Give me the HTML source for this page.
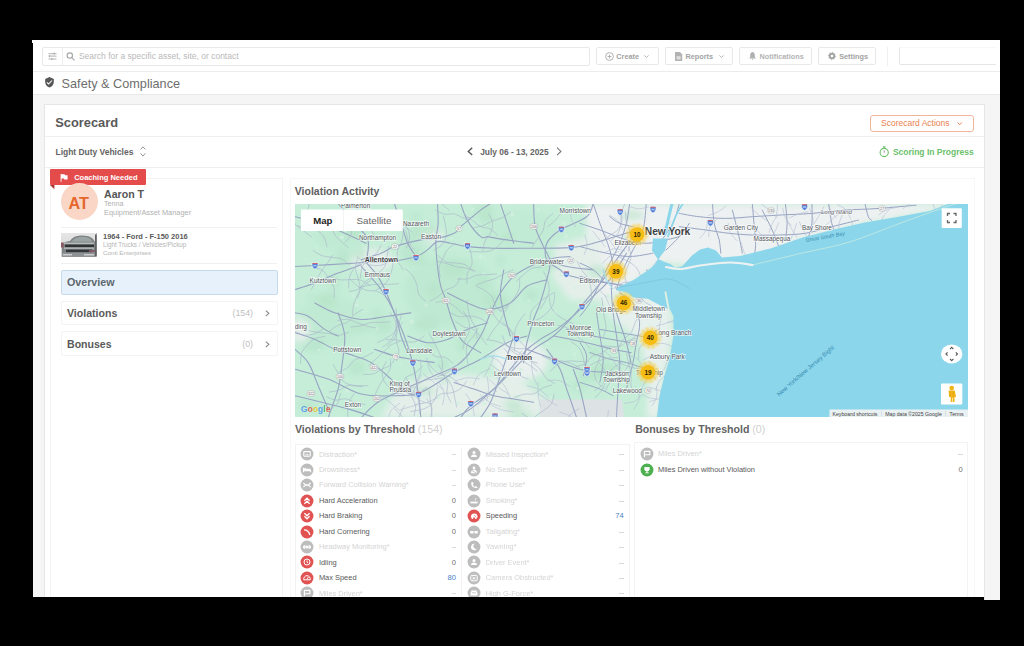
<!DOCTYPE html>
<html><head><meta charset="utf-8"><style>
html,body{margin:0;padding:0;}
body{width:1024px;height:646px;background:#000;position:relative;overflow:hidden;font-family:"Liberation Sans",sans-serif;}
.t{position:absolute;white-space:nowrap;}
.r{position:absolute;}
#wrap{position:absolute;left:0;top:0;width:1024px;height:646px;}
#outer{position:absolute;left:0;top:0;width:1024px;height:646px;filter:blur(0.6px);}
</style></head><body>
<div id="outer"><div id="wrap"><div class="r" style="left:33.00px;top:40.00px;width:967.00px;height:557.00px;background:#fff;"></div>
<div class="r" style="left:32.00px;top:40.00px;width:1.00px;height:3.00px;background:#fff;"></div>
<div class="r" style="left:984.00px;top:590.00px;width:16.00px;height:10.00px;background:#f5f5f5;"></div>
<div class="r" style="left:33.00px;top:94.50px;width:967.00px;height:502.50px;background:#f5f5f5;"></div>
<div class="r" style="left:33.00px;top:71.00px;width:967.00px;height:1.00px;background:#ececec;"></div>
<div class="r" style="left:33.00px;top:93.80px;width:967.00px;height:1.00px;background:#e8e8e8;"></div>
<div class="r" style="left:41.50px;top:46.50px;width:548.50px;height:19.00px;border:1px solid #e8e8e8;border-radius:2px;box-sizing:border-box;"></div>
<div class="r" style="left:62.00px;top:47.00px;width:1.00px;height:18.00px;background:#ececec;"></div>
<div class="t" style="left:78.90px;top:51.55px;font-size:8.5px;line-height:8.5px;color:#b9b9b9;font-weight:400;">Search for a specific asset, site, or contact</div>
<div class="r" style="left:596.30px;top:46.80px;width:63.10px;height:18.40px;border:1px solid #e8e8e8;border-radius:2px;box-sizing:border-box;"></div>
<div class="t" style="left:616.30px;top:52.92px;font-size:7.3px;line-height:7.3px;color:#a2a2a2;font-weight:700;">Create</div>
<div class="r" style="left:664.90px;top:46.80px;width:68.00px;height:18.40px;border:1px solid #e8e8e8;border-radius:2px;box-sizing:border-box;"></div>
<div class="t" style="left:685.50px;top:52.92px;font-size:7.3px;line-height:7.3px;color:#a2a2a2;font-weight:700;">Reports</div>
<div class="r" style="left:739.10px;top:46.80px;width:73.10px;height:18.40px;border:1px solid #e8e8e8;border-radius:2px;box-sizing:border-box;"></div>
<div class="t" style="left:759.60px;top:52.92px;font-size:7.3px;line-height:7.3px;color:#b3b3b3;font-weight:700;">Notifications</div>
<div class="r" style="left:818.40px;top:46.80px;width:57.90px;height:18.40px;border:1px solid #e8e8e8;border-radius:2px;box-sizing:border-box;"></div>
<div class="t" style="left:839.20px;top:52.92px;font-size:7.3px;line-height:7.3px;color:#a2a2a2;font-weight:700;">Settings</div>
<div class="r" style="left:887.00px;top:47.00px;width:1.00px;height:19.00px;background:#f0f0f0;"></div>
<div class="r" style="left:899.00px;top:46.60px;width:97.00px;height:18.90px;border-left:1px solid #e6e6e6;border-bottom:1px solid #e6e6e6;border-top:1px solid #f8f8f8;box-sizing:border-box;border-radius:0 0 0 2px;"></div>
<div class="t" style="left:61.60px;top:77.65px;font-size:12.7px;line-height:12.7px;color:#6e6e6e;font-weight:400;">Safety &amp; Compliance</div>
<div class="r" style="left:44.00px;top:104.00px;width:941.00px;height:496.00px;background:#fff;border:1px solid #e6e6e6;box-sizing:border-box;"></div>
<div class="t" style="left:55.20px;top:117.32px;font-size:12.85px;line-height:12.85px;color:#595959;font-weight:700;">Scorecard</div>
<div class="r" style="left:45.00px;top:136.00px;width:939.00px;height:1.00px;background:#efefef;"></div>
<div class="r" style="left:869.50px;top:115.40px;width:104.80px;height:16.30px;border:1px solid #f2b59a;border-radius:3px;box-sizing:border-box;"></div>
<div class="t" style="left:881.00px;top:119.10px;font-size:8.5px;line-height:8.5px;color:#e9814f;font-weight:400;">Scorecard Actions</div>
<div class="t" style="left:55.50px;top:148.25px;font-size:8.45px;line-height:8.45px;color:#636363;font-weight:700;">Light Duty Vehicles</div>
<div class="t" style="left:480.20px;top:148.29px;font-size:8.4px;line-height:8.4px;color:#636363;font-weight:700;">July 06 - 13, 2025</div>
<div class="t" style="left:892.90px;top:148.20px;font-size:8.5px;line-height:8.5px;color:#6cbf6c;font-weight:700;">Scoring In Progress</div>
<div class="r" style="left:45.00px;top:166.50px;width:939.00px;height:1.00px;background:#efefef;"></div>
<div class="r" style="left:50.00px;top:177.50px;width:233.00px;height:422.50px;border:1px solid #f3f3f3;box-sizing:border-box;"></div>
<div class="r" style="left:290.00px;top:177.50px;width:684.50px;height:422.50px;border:1px solid #f7f7f7;box-sizing:border-box;"></div>
<div class="r" style="left:50.00px;top:169.40px;width:95.50px;height:15.70px;background:#e44c4c;border-radius:1px;"></div>
<div class="t" style="left:74.20px;top:174.05px;font-size:7.5px;line-height:7.5px;color:#fff;font-weight:700;">Coaching Needed</div>
<div class="r" style="left:61.00px;top:183.00px;width:37.00px;height:37.00px;background:#f9d6c6;border-radius:50%;"></div>
<div class="t" style="left:68.60px;top:194.79px;font-size:16.2px;line-height:16.2px;color:#e5672d;font-weight:700;">AT</div>
<div class="t" style="left:104.00px;top:188.53px;font-size:10.6px;line-height:10.6px;color:#555;font-weight:700;">Aaron T</div>
<div class="t" style="left:104.00px;top:201.29px;font-size:7.1px;line-height:7.1px;color:#b0b0b0;font-weight:400;">Tenna</div>
<div class="t" style="left:104.00px;top:208.94px;font-size:7.4px;line-height:7.4px;color:#b0b0b0;font-weight:400;">Equipment/Asset Manager</div>
<div class="r" style="left:61.00px;top:226.50px;width:216.00px;height:1.00px;background:#f0f0f0;"></div>
<div class="r" style="left:61.40px;top:232.90px;width:35.80px;height:23.40px;background:#8a8f94;"></div>
<div class="t" style="left:103.00px;top:232.68px;font-size:7.47px;line-height:7.47px;color:#5a5a5a;font-weight:700;">1964 - Ford - F-150 2016</div>
<div class="t" style="left:103.00px;top:241.67px;font-size:6.3px;line-height:6.3px;color:#b5b5b5;font-weight:400;">Light Trucks / Vehicles/Pickup</div>
<div class="t" style="left:103.00px;top:250.30px;font-size:6.26px;line-height:6.26px;color:#b5b5b5;font-weight:400;">Conti Enterprises</div>
<div class="r" style="left:61.00px;top:263.00px;width:216.00px;height:1.00px;background:#f0f0f0;"></div>
<div class="r" style="left:61.00px;top:269.50px;width:217.00px;height:25.70px;background:#e7f1fb;border:1px solid #c6daeb;border-radius:2px;box-sizing:border-box;"></div>
<div class="t" style="left:67.00px;top:277.24px;font-size:10.7px;line-height:10.7px;color:#5d666e;font-weight:700;">Overview</div>
<div class="r" style="left:61.00px;top:301.00px;width:217.00px;height:24.30px;border:1px solid #f4f4f4;border-radius:2px;box-sizing:border-box;"></div>
<div class="t" style="left:67.00px;top:308.05px;font-size:10.57px;line-height:10.57px;color:#5a5a5a;font-weight:700;">Violations</div>
<div class="t" style="right:771.00px;top:309.05px;font-size:8.8px;line-height:8.8px;color:#c0c0c0;font-weight:400;text-align:right;">(154)</div>
<div class="r" style="left:61.00px;top:330.90px;width:217.00px;height:25.40px;border:1px solid #f4f4f4;border-radius:2px;box-sizing:border-box;"></div>
<div class="t" style="left:67.00px;top:339.05px;font-size:10.57px;line-height:10.57px;color:#5a5a5a;font-weight:700;">Bonuses</div>
<div class="t" style="right:771.00px;top:340.05px;font-size:8.8px;line-height:8.8px;color:#c0c0c0;font-weight:400;text-align:right;">(0)</div>
<div class="t" style="left:294.80px;top:185.51px;font-size:10.5px;line-height:10.5px;color:#606060;font-weight:700;">Violation Activity</div>
<svg width="673" height="213.3" viewBox="295 203.5 673 213.3" style="position:absolute;left:295px;top:203.5px;font-family:'Liberation Sans',sans-serif"><defs><filter id="bl" x="-20%" y="-20%" width="140%" height="140%"><feGaussianBlur stdDeviation="3"/></filter><filter id="bl2"><feGaussianBlur stdDeviation="1.2"/></filter></defs><rect x="295" y="203.5" width="673" height="213.3" fill="#c5edd8"/><g filter="url(#bl)"><ellipse cx="450" cy="290" rx="45" ry="35" fill="#bfe9d2"/><ellipse cx="330" cy="320" rx="30" ry="25" fill="#c0ead3"/><ellipse cx="520" cy="230" rx="40" ry="20" fill="#c2ebd5"/><ellipse cx="560" cy="330" rx="30" ry="15" fill="#c3ecd6"/><ellipse cx="340" cy="235" rx="25" ry="15" fill="#c0ead3"/><polygon points="585,203.5 968,203.5 968,205 930,211 865,223 800,240 760,258 700,266 660,262 640,278 620,292 600,300 592,280 588,250" fill="#edf1f1" /><polygon points="600,300 640,292 672,300 672,340 665,372 660,417 646,417 648,380 640,340 612,318" fill="#e6f0ec" /><polygon points="555,245 600,232 602,300 570,300 552,275" fill="#e4efea" /><ellipse cx="520" cy="360" rx="28" ry="20" fill="#e9f0ee"/><ellipse cx="372" cy="260" rx="22" ry="12" fill="#e3eee9"/><ellipse cx="432" cy="236" rx="12" ry="7" fill="#e3eee9"/><polygon points="380,417 400,385 440,372 480,375 520,380 545,398 540,417" fill="#e4efea" /><ellipse cx="300" cy="330" rx="10" ry="12" fill="#e3eee9"/><ellipse cx="410.1" cy="236.7" rx="10.5" ry="3.4" fill="#b4e3c6" opacity="0.6"/><ellipse cx="482.2" cy="281.8" rx="4.6" ry="6.0" fill="#b4e3c6" opacity="0.6"/><ellipse cx="312.7" cy="296.1" rx="4.7" ry="3.5" fill="#b4e3c6" opacity="0.6"/><ellipse cx="444.3" cy="378.6" rx="5.2" ry="4.3" fill="#b4e3c6" opacity="0.6"/><ellipse cx="513.3" cy="404.0" rx="9.8" ry="5.4" fill="#b4e3c6" opacity="0.6"/><ellipse cx="631.9" cy="214.8" rx="12.6" ry="4.7" fill="#b4e3c6" opacity="0.6"/><ellipse cx="349.0" cy="229.7" rx="7.1" ry="7.9" fill="#b4e3c6" opacity="0.6"/><ellipse cx="361.4" cy="327.1" rx="10.4" ry="5.2" fill="#b4e3c6" opacity="0.6"/><ellipse cx="486.2" cy="218.2" rx="4.6" ry="4.2" fill="#b4e3c6" opacity="0.6"/><ellipse cx="531.3" cy="294.8" rx="7.1" ry="6.5" fill="#b4e3c6" opacity="0.6"/><ellipse cx="454.1" cy="268.0" rx="11.9" ry="7.2" fill="#b4e3c6" opacity="0.6"/><ellipse cx="383.0" cy="325.6" rx="9.3" ry="8.3" fill="#b4e3c6" opacity="0.6"/><ellipse cx="548.0" cy="265.5" rx="13.8" ry="3.7" fill="#b4e3c6" opacity="0.6"/><ellipse cx="442.2" cy="364.0" rx="5.5" ry="5.9" fill="#b4e3c6" opacity="0.6"/><ellipse cx="313.3" cy="345.3" rx="11.6" ry="6.4" fill="#b4e3c6" opacity="0.6"/><ellipse cx="597.7" cy="270.9" rx="11.0" ry="6.6" fill="#b4e3c6" opacity="0.6"/><ellipse cx="497.2" cy="300.8" rx="12.4" ry="8.7" fill="#b4e3c6" opacity="0.6"/><ellipse cx="461.2" cy="344.5" rx="4.6" ry="7.2" fill="#b4e3c6" opacity="0.6"/><ellipse cx="520.0" cy="413.6" rx="12.2" ry="4.7" fill="#b4e3c6" opacity="0.6"/><ellipse cx="431.2" cy="345.4" rx="4.2" ry="5.8" fill="#b4e3c6" opacity="0.6"/><ellipse cx="357.1" cy="229.6" rx="4.6" ry="7.6" fill="#b4e3c6" opacity="0.6"/><ellipse cx="344.0" cy="257.0" rx="7.9" ry="8.2" fill="#b4e3c6" opacity="0.6"/><ellipse cx="327.4" cy="299.3" rx="9.5" ry="8.3" fill="#b4e3c6" opacity="0.6"/><ellipse cx="578.6" cy="386.4" rx="6.8" ry="5.5" fill="#b4e3c6" opacity="0.6"/><ellipse cx="422.0" cy="390.7" rx="13.6" ry="3.9" fill="#b4e3c6" opacity="0.6"/><ellipse cx="359.9" cy="253.7" rx="6.3" ry="5.9" fill="#b4e3c6" opacity="0.6"/><ellipse cx="500.3" cy="260.2" rx="4.0" ry="5.5" fill="#b4e3c6" opacity="0.6"/><ellipse cx="425.5" cy="323.9" rx="13.5" ry="7.1" fill="#b4e3c6" opacity="0.6"/><ellipse cx="475.3" cy="334.7" rx="10.8" ry="3.3" fill="#b4e3c6" opacity="0.6"/><ellipse cx="605.8" cy="368.8" rx="12.7" ry="7.8" fill="#b4e3c6" opacity="0.6"/><ellipse cx="433.4" cy="288.8" rx="5.0" ry="6.8" fill="#b4e3c6" opacity="0.6"/><ellipse cx="321.2" cy="219.1" rx="6.1" ry="4.0" fill="#b4e3c6" opacity="0.6"/><ellipse cx="415.6" cy="216.0" rx="4.0" ry="3.9" fill="#b4e3c6" opacity="0.6"/><ellipse cx="334.5" cy="281.4" rx="4.3" ry="8.2" fill="#b4e3c6" opacity="0.6"/><ellipse cx="508.8" cy="236.2" rx="6.5" ry="5.1" fill="#b4e3c6" opacity="0.6"/><ellipse cx="423.8" cy="230.8" rx="12.5" ry="9.0" fill="#b4e3c6" opacity="0.6"/><ellipse cx="458.4" cy="306.6" rx="4.9" ry="3.6" fill="#b4e3c6" opacity="0.6"/><ellipse cx="416.5" cy="260.6" rx="12.3" ry="4.0" fill="#b4e3c6" opacity="0.6"/><ellipse cx="307.9" cy="404.7" rx="9.3" ry="3.9" fill="#b4e3c6" opacity="0.6"/><ellipse cx="484.7" cy="210.7" rx="9.3" ry="8.9" fill="#b4e3c6" opacity="0.6"/><ellipse cx="593.5" cy="351.2" rx="6.6" ry="5.2" fill="#b4e3c6" opacity="0.6"/><ellipse cx="356.8" cy="367.1" rx="9.3" ry="7.7" fill="#b4e3c6" opacity="0.6"/><ellipse cx="412.1" cy="251.8" rx="12.1" ry="8.9" fill="#b4e3c6" opacity="0.6"/><ellipse cx="589.9" cy="374.3" rx="12.2" ry="7.4" fill="#b4e3c6" opacity="0.6"/><ellipse cx="377.1" cy="313.7" rx="7.6" ry="3.2" fill="#b4e3c6" opacity="0.6"/></g><g fill="#d3f1e1" opacity="0.8"><circle cx="309.2" cy="263.7" r="1.0"/><circle cx="528.5" cy="405.9" r="1.3"/><circle cx="609.2" cy="412.5" r="2.1"/><circle cx="420.3" cy="251.3" r="1.0"/><circle cx="364.9" cy="247.9" r="1.6"/><circle cx="597.1" cy="381.5" r="1.4"/><circle cx="515.5" cy="372.9" r="0.7"/><circle cx="518.0" cy="396.1" r="1.9"/><circle cx="547.5" cy="305.4" r="0.9"/><circle cx="560.4" cy="274.8" r="1.9"/><circle cx="620.6" cy="288.1" r="1.2"/><circle cx="612.4" cy="357.2" r="0.9"/><circle cx="341.9" cy="236.7" r="2.0"/><circle cx="566.1" cy="235.7" r="1.9"/><circle cx="623.5" cy="343.0" r="1.2"/><circle cx="481.1" cy="232.5" r="0.6"/><circle cx="620.4" cy="341.4" r="1.4"/><circle cx="608.1" cy="296.1" r="2.0"/><circle cx="572.6" cy="249.3" r="1.0"/><circle cx="396.7" cy="255.5" r="1.5"/><circle cx="385.6" cy="293.0" r="0.8"/><circle cx="600.3" cy="279.3" r="1.3"/><circle cx="492.5" cy="394.9" r="1.3"/><circle cx="602.8" cy="310.3" r="1.5"/><circle cx="472.8" cy="208.9" r="1.3"/><circle cx="360.4" cy="205.8" r="1.9"/><circle cx="356.9" cy="304.4" r="1.8"/><circle cx="483.6" cy="273.5" r="1.4"/><circle cx="483.3" cy="369.7" r="0.8"/><circle cx="484.9" cy="257.2" r="1.0"/><circle cx="554.8" cy="311.6" r="1.5"/><circle cx="550.8" cy="396.6" r="1.3"/><circle cx="502.1" cy="311.2" r="1.4"/><circle cx="528.6" cy="300.0" r="1.5"/><circle cx="457.8" cy="402.7" r="1.7"/><circle cx="589.3" cy="402.9" r="1.0"/><circle cx="484.6" cy="403.1" r="1.9"/><circle cx="345.3" cy="230.5" r="1.3"/><circle cx="323.9" cy="255.5" r="0.7"/><circle cx="520.9" cy="369.6" r="2.0"/><circle cx="351.0" cy="355.4" r="1.7"/><circle cx="347.2" cy="390.4" r="2.1"/><circle cx="372.5" cy="405.0" r="1.2"/><circle cx="460.8" cy="412.9" r="1.9"/><circle cx="353.3" cy="295.6" r="1.4"/><circle cx="411.9" cy="246.1" r="1.1"/><circle cx="538.3" cy="209.1" r="1.5"/><circle cx="445.4" cy="208.8" r="1.1"/><circle cx="505.9" cy="312.6" r="0.7"/><circle cx="625.1" cy="370.6" r="2.2"/><circle cx="334.6" cy="260.8" r="0.7"/><circle cx="557.1" cy="261.8" r="0.8"/><circle cx="439.3" cy="396.4" r="1.9"/><circle cx="385.3" cy="236.4" r="2.1"/><circle cx="488.3" cy="352.1" r="0.7"/><circle cx="319.0" cy="349.5" r="1.3"/><circle cx="323.9" cy="402.1" r="1.6"/><circle cx="564.5" cy="222.6" r="2.0"/><circle cx="322.0" cy="386.2" r="1.3"/><circle cx="411.9" cy="321.1" r="2.1"/><circle cx="388.4" cy="232.1" r="1.4"/><circle cx="378.7" cy="228.0" r="0.9"/><circle cx="316.6" cy="247.4" r="1.1"/><circle cx="400.7" cy="364.5" r="1.1"/><circle cx="465.0" cy="242.4" r="1.2"/><circle cx="306.0" cy="257.6" r="0.6"/><circle cx="541.9" cy="320.7" r="0.9"/><circle cx="456.7" cy="401.3" r="0.8"/><circle cx="570.2" cy="295.8" r="1.4"/><circle cx="575.4" cy="287.5" r="1.4"/><circle cx="527.0" cy="411.3" r="1.1"/><circle cx="574.7" cy="353.4" r="1.6"/><circle cx="433.6" cy="278.0" r="0.7"/><circle cx="342.8" cy="219.9" r="1.8"/><circle cx="384.3" cy="239.3" r="0.7"/><circle cx="577.6" cy="387.8" r="1.7"/><circle cx="393.0" cy="255.9" r="1.1"/><circle cx="451.6" cy="238.1" r="1.3"/><circle cx="386.9" cy="407.0" r="2.2"/><circle cx="480.5" cy="256.3" r="2.1"/><circle cx="402.2" cy="279.9" r="0.6"/><circle cx="425.9" cy="304.7" r="1.4"/><circle cx="366.3" cy="311.0" r="0.6"/><circle cx="387.2" cy="223.8" r="1.2"/><circle cx="313.8" cy="209.7" r="1.1"/><circle cx="376.8" cy="328.0" r="1.4"/><circle cx="547.7" cy="343.1" r="1.7"/><circle cx="590.1" cy="286.8" r="1.1"/><circle cx="625.0" cy="236.4" r="1.8"/><circle cx="512.3" cy="214.2" r="1.9"/></g><polygon points="540,399 622,399 624,417 540,417" fill="#dde2e5" /><path d="M295.0,266.0 C298.3,265.8 306.6,265.4 314.9,265.0 C323.2,264.5 336.4,263.8 344.7,263.3 C353.0,262.8 356.8,262.4 364.6,262.0 C372.3,261.6 382.5,262.0 391.1,261.0 C399.6,260.0 409.9,258.0 415.9,256.0 C422.0,254.1 424.0,251.9 427.5,249.4 C431.1,246.9 433.6,242.2 437.5,241.1 C441.3,240.0 445.8,241.9 450.7,242.8 C455.7,243.6 460.1,245.2 467.3,246.1 C474.5,246.9 483.9,247.5 493.8,247.7 C503.8,248.0 514.2,247.8 526.9,247.7 C539.6,247.6 559.0,247.9 570.0,247.1 C581.1,246.2 583.1,245.4 593.2,242.8 C603.4,240.1 624.7,233.1 631.0,231.2" fill="none" stroke="#98a4c3" stroke-width="1.1" stroke-linejoin="round" stroke-linecap="round" /><path d="M361.3,259.3 C364.6,258.2 375.6,254.9 381.1,252.7 C386.7,250.5 387.8,248.3 394.4,246.1 C401.0,243.9 413.7,240.8 420.9,239.4 C428.1,238.1 432.0,238.9 437.5,237.8 C443.0,236.7 450.2,234.8 454.1,232.8 C457.9,230.9 456.3,230.1 460.7,226.2 C465.1,222.3 475.6,213.5 480.6,209.6 C485.5,205.8 488.8,204.1 490.5,203.0" fill="none" stroke="#98a4c3" stroke-width="1.1" stroke-linejoin="round" stroke-linecap="round" /><path d="M366.2,262.0 C368.2,264.3 374.5,270.9 377.8,275.9 C381.2,280.9 383.4,285.7 386.1,291.8 C388.9,297.9 391.4,305.0 394.4,312.3 C397.4,319.6 401.3,327.3 404.3,335.5 C407.4,343.8 410.4,353.2 412.6,362.1 C414.8,370.9 416.2,379.4 417.6,388.6 C419.0,397.7 420.4,412.3 420.9,417.1" fill="none" stroke="#98a4c3" stroke-width="1.1" stroke-linejoin="round" stroke-linecap="round" /><path d="M437.5,203.0 C437.6,206.3 438.4,216.5 438.1,222.9 C437.9,229.2 435.9,233.9 435.8,241.1 C435.7,248.3 436.7,258.5 437.5,266.0 C438.3,273.4 439.4,280.3 440.8,285.8 C442.2,291.4 444.1,294.1 445.8,299.1 C447.4,304.1 448.8,310.1 450.7,315.7 C452.7,321.2 455.2,327.8 457.4,332.2 C459.6,336.6 460.1,338.9 464.0,342.2 C467.9,345.5 477.8,350.5 480.6,352.1" fill="none" stroke="#98a4c3" stroke-width="1.1" stroke-linejoin="round" stroke-linecap="round" /><path d="M295.0,289.1 C298.3,288.0 307.7,285.3 314.9,282.5 C322.1,279.8 330.3,275.6 338.1,272.6 C345.8,269.5 357.4,265.7 361.3,264.3" fill="none" stroke="#98a4c3" stroke-width="1.1" stroke-linejoin="round" stroke-linecap="round" /><path d="M295.0,332.2 C298.3,333.3 308.3,336.1 314.9,338.9 C321.5,341.6 328.1,346.0 334.8,348.8 C341.4,351.6 348.6,353.2 354.6,355.4 C360.7,357.6 365.1,358.2 371.2,362.1 C377.3,365.9 386.1,374.2 391.1,378.6 C396.1,383.0 397.2,385.8 401.0,388.6 C404.9,391.3 412.1,394.1 414.3,395.2" fill="none" stroke="#98a4c3" stroke-width="1.1" stroke-linejoin="round" stroke-linecap="round" /><path d="M295.0,368.7 C300.5,370.3 317.1,374.5 328.1,378.6 C339.2,382.8 350.2,390.8 361.3,393.5 C372.3,396.3 384.5,395.5 394.4,395.2 C404.3,394.9 411.0,395.7 420.9,391.9 C430.9,388.0 444.1,377.5 454.1,372.0 C464.0,366.5 471.7,363.7 480.6,358.7 C489.4,353.8 499.3,346.0 507.1,342.2 C514.8,338.3 523.6,336.6 526.9,335.5" fill="none" stroke="#98a4c3" stroke-width="1.1" stroke-linejoin="round" stroke-linecap="round" /><path d="M361.3,417.1 C364.0,414.5 370.7,406.6 377.8,401.8 C385.0,397.1 395.0,393.0 404.3,388.6 C413.7,384.1 424.8,379.7 434.2,375.3 C443.6,370.9 452.9,368.7 460.7,362.1 C468.4,355.4 475.6,343.8 480.6,335.5 C485.5,327.3 487.2,319.5 490.5,312.3 C493.8,305.2 496.6,298.5 500.4,292.5 C504.3,286.4 508.2,280.6 513.7,275.9 C519.2,271.2 526.9,267.3 533.6,264.3 C540.2,261.3 547.4,259.1 553.5,257.7 C559.5,256.3 567.3,256.3 570.0,256.0" fill="none" stroke="#98a4c3" stroke-width="1.1" stroke-linejoin="round" stroke-linecap="round" /><path d="M593.2,203.0 C592.1,205.2 592.1,211.8 586.6,216.2 C581.1,220.7 566.7,225.1 560.1,229.5 C553.5,233.9 549.0,237.8 546.8,242.8 C544.6,247.7 544.6,254.9 546.8,259.3 C549.0,263.7 556.8,266.8 560.1,269.3 C563.4,271.8 562.3,272.6 566.7,274.2 C571.1,275.9 580.0,277.8 586.6,279.2 C593.2,280.6 599.1,281.4 606.5,282.5 C613.9,283.6 626.9,285.3 631.0,285.8" fill="none" stroke="#98a4c3" stroke-width="1.1" stroke-linejoin="round" stroke-linecap="round" /><path d="M533.6,203.0 C533.8,206.9 533.6,219.0 535.2,226.2 C536.9,233.4 541.0,240.3 543.5,246.1 C546.0,251.9 549.6,255.5 550.1,261.0 C550.7,266.5 548.5,272.3 546.8,279.2 C545.2,286.1 542.4,295.8 540.2,302.4 C538.0,309.0 535.8,312.3 533.6,319.0 C531.4,325.6 528.6,335.0 526.9,342.2 C525.3,349.4 524.2,358.7 523.6,362.1" fill="none" stroke="#98a4c3" stroke-width="1.1" stroke-linejoin="round" stroke-linecap="round" /><path d="M631.0,239.4 C628.5,242.8 621.0,252.7 616.4,259.3 C611.8,266.0 608.1,272.6 603.1,279.2 C598.2,285.8 592.1,292.5 586.6,299.1 C581.1,305.7 575.5,312.9 570.0,319.0 C564.5,325.0 559.5,330.6 553.5,335.5 C547.4,340.5 540.2,343.3 533.6,348.8 C526.9,354.3 520.3,362.0 513.7,368.7 C507.1,375.3 501.0,381.9 493.8,388.6 C486.6,395.2 477.2,403.7 470.6,408.4 C464.0,413.2 456.8,415.6 454.1,417.1" fill="none" stroke="#98a4c3" stroke-width="1.1" stroke-linejoin="round" stroke-linecap="round" /><path d="M626.4,252.7 C623.6,257.1 615.3,272.0 609.8,279.2 C604.3,286.4 598.7,290.3 593.2,295.8 C587.7,301.3 582.7,306.8 576.6,312.3 C570.6,317.9 562.8,324.5 556.8,328.9 C550.7,333.3 545.2,335.5 540.2,338.9 C535.2,342.2 529.2,347.1 526.9,348.8" fill="none" stroke="#98a4c3" stroke-width="1.1" stroke-linejoin="round" stroke-linecap="round" /><path d="M526.9,348.8 C531.4,350.4 543.5,355.1 553.5,358.7 C563.4,362.3 573.7,368.1 586.6,370.3 C599.5,372.5 623.6,371.7 631.0,372.0" fill="none" stroke="#98a4c3" stroke-width="1.1" stroke-linejoin="round" stroke-linecap="round" /><path d="M526.9,348.8 C524.2,352.1 515.9,362.0 510.4,368.7 C504.8,375.3 500.4,382.5 493.8,388.6 C487.2,394.6 476.1,400.4 470.6,405.1 C465.1,409.9 462.3,415.1 460.7,417.1" fill="none" stroke="#98a4c3" stroke-width="1.1" stroke-linejoin="round" stroke-linecap="round" /><path d="M553.5,335.5 C559.0,336.6 576.6,340.0 586.6,342.2 C596.5,344.4 605.7,347.1 613.1,348.8 C620.5,350.4 628.0,351.6 631.0,352.1" fill="none" stroke="#98a4c3" stroke-width="1.1" stroke-linejoin="round" stroke-linecap="round" /><path d="M513.7,335.5 C512.6,338.9 509.3,348.8 507.1,355.4 C504.9,362.0 503.2,367.6 500.4,375.3 C497.7,383.0 493.8,394.9 490.5,401.8 C487.2,408.8 482.2,414.5 480.6,417.1" fill="none" stroke="#98a4c3" stroke-width="1.1" stroke-linejoin="round" stroke-linecap="round" /><path d="M503.8,269.3 C503.2,273.1 500.4,285.3 500.4,292.5 C500.4,299.6 502.1,305.2 503.8,312.3 C505.4,319.5 509.3,331.7 510.4,335.5" fill="none" stroke="#98a4c3" stroke-width="1.1" stroke-linejoin="round" stroke-linecap="round" /><path d="M338.1,203.0 C340.8,206.3 349.7,216.8 354.6,222.9 C359.6,229.0 366.0,232.9 367.9,239.4 C369.8,246.0 366.5,258.2 366.2,262.0" fill="none" stroke="#98a4c3" stroke-width="1.1" stroke-linejoin="round" stroke-linecap="round" /><path d="M407.7,335.5 C411.0,336.6 420.9,341.6 427.5,342.2 C434.2,342.7 440.8,341.1 447.4,338.9 C454.0,336.6 460.7,331.7 467.3,328.9 C473.9,326.1 483.9,323.4 487.2,322.3" fill="none" stroke="#98a4c3" stroke-width="1.1" stroke-linejoin="round" stroke-linecap="round" /><path d="M361.3,266.0 C364.6,269.8 375.6,281.4 381.1,289.1 C386.7,296.9 391.1,304.6 394.4,312.3 C397.7,320.1 398.8,328.9 401.0,335.5 C403.2,342.2 406.6,349.3 407.7,352.1" fill="none" stroke="#98a4c3" stroke-width="1.1" stroke-linejoin="round" stroke-linecap="round" /><path d="M338.1,312.3 C339.2,316.2 344.1,326.2 344.7,335.5 C345.3,344.9 342.5,359.8 341.4,368.7 C340.3,377.5 340.3,380.5 338.1,388.6 C335.9,396.6 329.8,412.3 328.1,417.1" fill="none" stroke="#98a4c3" stroke-width="1.1" stroke-linejoin="round" stroke-linecap="round" /><path d="M295.0,348.8 C297.2,351.0 304.4,356.0 308.2,362.1 C312.1,368.1 314.9,377.5 318.2,385.2 C321.5,393.0 326.5,404.6 328.1,408.4" fill="none" stroke="#98a4c3" stroke-width="1.1" stroke-linejoin="round" stroke-linecap="round" /><path d="M374.5,348.8 C377.8,349.9 388.3,353.8 394.4,355.4 C400.5,357.1 404.3,357.6 411.0,358.7 C417.6,359.8 430.3,361.5 434.2,362.1" fill="none" stroke="#98a4c3" stroke-width="1.1" stroke-linejoin="round" stroke-linecap="round" /><path d="M447.4,292.5 C450.7,294.1 460.7,299.6 467.3,302.4 C473.9,305.2 480.0,309.0 487.2,309.0 C494.4,309.0 503.7,306.3 510.4,302.4 C517.0,298.5 520.9,289.7 526.9,285.8 C533.0,282.0 543.5,280.3 546.8,279.2" fill="none" stroke="#98a4c3" stroke-width="1.1" stroke-linejoin="round" stroke-linecap="round" /><path d="M566.7,328.9 C571.1,330.0 582.5,333.3 593.2,335.5 C603.9,337.8 624.7,341.1 631.0,342.2" fill="none" stroke="#98a4c3" stroke-width="1.1" stroke-linejoin="round" stroke-linecap="round" /><path d="M546.8,259.3 C550.1,260.4 559.0,264.3 566.7,266.0 C574.4,267.6 588.8,268.7 593.2,269.3" fill="none" stroke="#98a4c3" stroke-width="1.1" stroke-linejoin="round" stroke-linecap="round" /><path d="M487.2,236.1 C490.5,236.7 499.3,238.3 507.1,239.4 C514.8,240.6 529.2,242.2 533.6,242.8" fill="none" stroke="#98a4c3" stroke-width="1.1" stroke-linejoin="round" stroke-linecap="round" /><path d="M295.0,216.2 C299.4,217.4 313.2,220.1 321.5,222.9 C329.8,225.6 337.2,229.5 344.7,232.8 C352.2,236.1 362.6,241.1 366.2,242.8" fill="none" stroke="#98a4c3" stroke-width="1.1" stroke-linejoin="round" stroke-linecap="round" /><path d="M394.4,203.0 C395.5,206.3 398.8,216.3 401.0,222.9 C403.2,229.5 405.2,237.2 407.7,242.8 C410.1,248.3 414.6,253.8 415.9,256.0" fill="none" stroke="#98a4c3" stroke-width="1.1" stroke-linejoin="round" stroke-linecap="round" /><path d="M314.9,302.4 C318.2,304.1 327.0,309.6 334.8,312.3 C342.5,315.1 352.4,318.4 361.3,319.0 C370.1,319.5 379.5,316.8 387.8,315.7 C396.1,314.6 407.1,312.9 411.0,312.3" fill="none" stroke="#98a4c3" stroke-width="1.1" stroke-linejoin="round" stroke-linecap="round" /><path d="M454.1,381.9 C457.4,383.0 467.3,386.3 473.9,388.6 C480.6,390.8 487.2,393.5 493.8,395.2 C500.4,396.8 507.1,397.4 513.7,398.5 C520.3,399.6 530.3,401.3 533.6,401.8" fill="none" stroke="#98a4c3" stroke-width="1.1" stroke-linejoin="round" stroke-linecap="round" /><path d="M295.0,395.2 C299.4,396.3 312.7,399.6 321.5,401.8 C330.3,404.0 339.2,405.9 348.0,408.4 C356.9,411.0 370.1,415.6 374.5,417.1" fill="none" stroke="#98a4c3" stroke-width="1.1" stroke-linejoin="round" stroke-linecap="round" /><path d="M573.3,368.7 C574.4,372.0 577.8,380.5 580.0,388.6 C582.2,396.6 585.5,412.3 586.6,417.1" fill="none" stroke="#98a4c3" stroke-width="1.1" stroke-linejoin="round" stroke-linecap="round" /><path d="M546.8,348.8 C549.0,352.1 556.8,362.0 560.1,368.7 C563.4,375.3 563.9,380.5 566.7,388.6 C569.5,396.6 575.0,412.3 576.6,417.1" fill="none" stroke="#98a4c3" stroke-width="1.1" stroke-linejoin="round" stroke-linecap="round" /><path d="M613.1,302.4 C614.2,305.7 617.5,315.7 619.7,322.3 C621.9,328.9 624.5,335.5 626.4,342.2 C628.2,348.8 630.2,358.7 631.0,362.1" fill="none" stroke="#98a4c3" stroke-width="1.1" stroke-linejoin="round" stroke-linecap="round" /><path d="M460.7,203.0 C461.8,205.8 464.0,214.0 467.3,219.6 C470.6,225.1 477.2,233.4 480.6,236.1 C483.9,238.9 486.1,236.1 487.2,236.1" fill="none" stroke="#98a4c3" stroke-width="1.1" stroke-linejoin="round" stroke-linecap="round" /><path d="M500.4,203.0 C501.5,206.3 504.9,216.3 507.1,222.9 C509.3,229.5 512.6,239.4 513.7,242.8" fill="none" stroke="#98a4c3" stroke-width="1.1" stroke-linejoin="round" stroke-linecap="round" /><path d="M295.0,312.3 C297.2,312.9 303.3,312.9 308.2,315.7 C313.2,318.4 319.9,325.6 324.8,328.9 C329.8,332.2 335.9,334.4 338.1,335.5" fill="none" stroke="#98a4c3" stroke-width="1.1" stroke-linejoin="round" stroke-linecap="round" /><path d="M580.0,222.9 C583.3,224.0 592.1,226.7 599.9,229.5 C607.6,232.3 618.7,237.2 626.4,239.4 C634.1,241.7 639.6,242.8 646.3,242.8 C652.9,242.8 660.6,240.6 666.1,239.4 C671.7,238.3 677.2,236.7 679.4,236.1" fill="none" stroke="#98a4c3" stroke-width="1.0" stroke-linejoin="round" stroke-linecap="round" /><path d="M580.0,246.1 C584.4,247.2 598.2,251.0 606.5,252.7 C614.8,254.4 622.0,256.0 629.7,256.0 C637.4,256.0 649.0,253.3 652.9,252.7" fill="none" stroke="#98a4c3" stroke-width="1.0" stroke-linejoin="round" stroke-linecap="round" /><path d="M593.2,203.0 C594.4,206.3 597.1,215.1 599.9,222.9 C602.6,230.6 607.6,241.7 609.8,249.4 C612.0,257.1 612.9,262.6 613.1,269.3 C613.4,275.9 611.5,282.0 611.5,289.1 C611.5,296.3 612.3,304.6 613.1,312.3 C614.0,320.1 615.3,327.3 616.5,335.5 C617.6,343.8 619.5,353.2 619.8,362.1 C620.0,370.9 618.7,379.4 618.1,388.6 C617.5,397.7 616.7,412.3 616.5,417.1" fill="none" stroke="#98a4c3" stroke-width="1.0" stroke-linejoin="round" stroke-linecap="round" /><path d="M629.7,203.0 C629.1,206.3 628.0,216.3 626.4,222.9 C624.7,229.5 622.5,236.1 619.8,242.8 C617.0,249.4 613.1,256.0 609.8,262.6 C606.5,269.3 603.2,275.9 599.9,282.5 C596.6,289.1 593.3,296.9 589.9,302.4 C586.6,307.9 581.7,313.5 580.0,315.7" fill="none" stroke="#98a4c3" stroke-width="1.0" stroke-linejoin="round" stroke-linecap="round" /><path d="M646.3,203.0 C645.7,207.4 645.2,221.8 643.0,229.5 C640.8,237.2 636.3,242.8 633.0,249.4 C629.7,256.0 625.8,262.6 623.1,269.3 C620.3,275.9 617.6,285.8 616.5,289.1" fill="none" stroke="#98a4c3" stroke-width="1.0" stroke-linejoin="round" stroke-linecap="round" /><path d="M580.0,275.9 C582.2,276.5 588.3,278.1 593.2,279.2 C598.2,280.3 603.7,281.4 609.8,282.5 C615.9,283.6 622.5,285.3 629.7,285.8 C636.9,286.4 649.0,285.8 652.9,285.8" fill="none" stroke="#98a4c3" stroke-width="1.0" stroke-linejoin="round" stroke-linecap="round" /><path d="M679.4,212.9 C682.7,213.5 691.5,215.4 699.3,216.2 C707.0,217.1 717.0,217.9 725.8,217.9 C734.6,217.9 743.5,216.8 752.3,216.2 C761.1,215.7 768.9,215.2 778.8,214.6 C788.8,214.0 800.9,213.8 811.9,212.9 C823.0,212.1 834.0,210.5 845.1,209.6 C856.1,208.8 866.4,208.8 878.2,208.0 C890.0,207.1 909.7,205.2 916.0,204.7" fill="none" stroke="#98a4c3" stroke-width="1.0" stroke-linejoin="round" stroke-linecap="round" /><path d="M679.4,226.2 C683.8,226.7 697.6,228.4 705.9,229.5 C714.2,230.6 721.4,232.0 729.1,232.8 C736.8,233.6 744.0,234.2 752.3,234.5 C760.6,234.8 770.0,234.8 778.8,234.5 C787.6,234.2 796.5,234.2 805.3,232.8 C814.1,231.4 823.0,228.4 831.8,226.2 C840.7,224.0 853.9,220.7 858.3,219.6" fill="none" stroke="#98a4c3" stroke-width="1.0" stroke-linejoin="round" stroke-linecap="round" /><path d="M712.5,203.0 C712.8,206.3 713.1,216.8 714.2,222.9 C715.3,229.0 718.1,234.5 719.2,239.4 C720.3,244.4 720.5,250.5 720.8,252.7" fill="none" stroke="#98a4c3" stroke-width="1.0" stroke-linejoin="round" stroke-linecap="round" /><path d="M752.3,203.0 C752.6,206.3 753.4,216.3 754.0,222.9 C754.5,229.5 755.6,236.7 755.6,242.8 C755.6,248.8 754.2,256.6 754.0,259.3" fill="none" stroke="#98a4c3" stroke-width="1.0" stroke-linejoin="round" stroke-linecap="round" /><path d="M785.4,203.0 C785.7,206.3 787.1,216.8 787.1,222.9 C787.1,229.0 785.7,236.7 785.4,239.4" fill="none" stroke="#98a4c3" stroke-width="1.0" stroke-linejoin="round" stroke-linecap="round" /><path d="M811.9,203.0 C811.9,206.3 812.5,217.4 811.9,222.9 C811.4,228.4 809.2,233.9 808.6,236.1" fill="none" stroke="#98a4c3" stroke-width="1.0" stroke-linejoin="round" stroke-linecap="round" /><path d="M732.4,209.6 C733.5,214.0 737.4,229.0 739.0,236.1 C740.7,243.3 741.8,249.9 742.4,252.7" fill="none" stroke="#98a4c3" stroke-width="1.0" stroke-linejoin="round" stroke-linecap="round" /><path d="M762.2,209.6 C763.9,212.9 769.4,223.4 772.2,229.5 C774.9,235.6 777.7,243.3 778.8,246.1" fill="none" stroke="#98a4c3" stroke-width="1.0" stroke-linejoin="round" stroke-linecap="round" /><path d="M828.5,203.0 C829.1,206.3 830.7,217.9 831.8,222.9 C832.9,227.8 834.6,231.2 835.1,232.8" fill="none" stroke="#98a4c3" stroke-width="1.0" stroke-linejoin="round" stroke-linecap="round" /><path d="M865.0,203.0 C865.5,205.2 867.2,213.5 868.3,216.2 C869.4,219.0 871.0,219.0 871.6,219.6" fill="none" stroke="#98a4c3" stroke-width="1.0" stroke-linejoin="round" stroke-linecap="round" /><path d="M619.8,292.5 C622.0,294.1 629.7,297.4 633.0,302.4 C636.3,307.4 639.1,315.7 639.6,322.3 C640.2,328.9 637.4,335.5 636.3,342.2 C635.2,348.8 634.7,354.3 633.0,362.1 C631.4,369.8 627.5,384.1 626.4,388.6" fill="none" stroke="#98a4c3" stroke-width="1.0" stroke-linejoin="round" stroke-linecap="round" /><path d="M599.9,328.9 C603.2,329.5 613.1,331.1 619.8,332.2 C626.4,333.3 633.6,334.4 639.6,335.5 C645.7,336.6 653.4,338.3 656.2,338.9" fill="none" stroke="#98a4c3" stroke-width="1.0" stroke-linejoin="round" stroke-linecap="round" /><path d="M589.9,352.1 C593.3,353.2 603.7,357.1 609.8,358.7 C615.9,360.4 620.3,360.4 626.4,362.1 C632.5,363.7 643.0,367.6 646.3,368.7" fill="none" stroke="#98a4c3" stroke-width="1.0" stroke-linejoin="round" stroke-linecap="round" /><path d="M580.0,381.9 C583.3,383.0 594.4,386.3 599.9,388.6 C605.4,390.8 610.9,394.1 613.1,395.2" fill="none" stroke="#98a4c3" stroke-width="1.0" stroke-linejoin="round" stroke-linecap="round" /><path d="M596.6,312.3 C597.1,316.2 598.8,327.8 599.9,335.5 C601.0,343.3 603.2,351.0 603.2,358.7 C603.2,366.5 600.4,378.1 599.9,381.9" fill="none" stroke="#98a4c3" stroke-width="1.0" stroke-linejoin="round" stroke-linecap="round" /><path d="M679.4,203.0 C678.3,206.3 676.1,216.3 672.8,222.9 C669.5,229.5 661.7,239.4 659.5,242.8" fill="none" stroke="#98a4c3" stroke-width="1.0" stroke-linejoin="round" stroke-linecap="round" /><path d="M689.3,222.9 C687.7,225.1 683.3,231.7 679.4,236.1 C675.5,240.5 668.4,247.2 666.1,249.4" fill="none" stroke="#98a4c3" stroke-width="1.0" stroke-linejoin="round" stroke-linecap="round" /><path d="M580.0,262.6 C582.2,263.7 589.4,266.5 593.2,269.3 C597.1,272.0 601.5,277.6 603.2,279.2" fill="none" stroke="#98a4c3" stroke-width="1.0" stroke-linejoin="round" stroke-linecap="round" /><path d="M646.3,269.3 C647.9,270.9 654.0,273.7 656.2,279.2 C658.4,284.7 659.0,298.5 659.5,302.4" fill="none" stroke="#98a4c3" stroke-width="1.0" stroke-linejoin="round" stroke-linecap="round" /><path d="M580.0,342.2 C581.1,344.4 586.1,349.9 586.6,355.4 C587.2,360.9 583.9,372.0 583.3,375.3" fill="none" stroke="#98a4c3" stroke-width="1.0" stroke-linejoin="round" stroke-linecap="round" /><path d="M609.8,216.2 C611.5,217.4 615.9,221.2 619.8,222.9 C623.6,224.5 630.8,225.6 633.0,226.2" fill="none" stroke="#98a4c3" stroke-width="1.0" stroke-linejoin="round" stroke-linecap="round" /><path d="M603.3,336.7 C603.7,335.1 605.8,330.4 606.0,327.1 C606.2,323.8 604.9,320.5 604.4,317.2 C603.9,313.9 603.5,310.6 603.1,307.3 C602.7,304.0 602.0,299.0 601.8,297.4" fill="none" stroke="#a7b4ca" stroke-width="0.6" stroke-linejoin="round" stroke-linecap="round" /><path d="M583.9,374.0 C584.8,372.6 587.0,367.8 589.4,365.6 C591.8,363.4 595.1,362.0 598.1,360.7 C601.1,359.4 604.4,358.3 607.6,357.7 C610.9,357.1 615.9,357.2 617.6,357.1" fill="none" stroke="#a7b4ca" stroke-width="0.6" stroke-linejoin="round" stroke-linecap="round" /><path d="M378.2,211.5 C379.5,212.6 383.1,216.3 386.0,217.7 C388.9,219.1 392.8,218.4 395.8,219.7 C398.8,221.0 401.4,223.3 404.1,225.3 C406.8,227.3 410.6,230.5 411.9,231.5" fill="none" stroke="#a7b4ca" stroke-width="0.6" stroke-linejoin="round" stroke-linecap="round" /><path d="M513.4,336.5 C512.7,335.0 511.3,329.8 509.1,327.5 C506.9,325.2 503.0,324.6 500.5,322.5 C498.0,320.4 495.8,317.5 494.1,314.7 C492.4,311.9 490.9,307.0 490.3,305.5" fill="none" stroke="#a7b4ca" stroke-width="0.6" stroke-linejoin="round" stroke-linecap="round" /><path d="M471.0,317.4 C469.5,316.6 464.8,314.7 462.1,312.8 C459.4,310.9 457.6,307.8 454.9,305.9 C452.2,304.0 449.1,302.1 446.0,301.4 C442.9,300.7 437.7,301.7 436.0,301.8" fill="none" stroke="#a7b4ca" stroke-width="0.6" stroke-linejoin="round" stroke-linecap="round" /><path d="M390.3,358.2 C390.3,359.8 391.1,365.1 390.2,368.2 C389.3,371.3 386.6,373.7 384.8,376.5 C383.0,379.3 381.0,382.1 379.4,385.0 C377.8,387.9 375.9,392.6 375.2,394.1" fill="none" stroke="#a7b4ca" stroke-width="0.6" stroke-linejoin="round" stroke-linecap="round" /><path d="M462.9,348.6 C463.3,347.0 464.2,342.0 465.3,338.9 C466.4,335.8 468.9,332.9 469.4,329.7 C469.9,326.5 469.5,322.9 468.5,319.8 C467.5,316.7 464.4,312.6 463.6,311.1" fill="none" stroke="#a7b4ca" stroke-width="0.6" stroke-linejoin="round" stroke-linecap="round" /><path d="M386.3,361.1 C385.6,362.6 382.6,367.0 382.2,370.2 C381.8,373.4 382.5,377.2 383.8,380.1 C385.1,383.0 387.8,385.6 390.2,387.8 C392.6,390.0 397.0,392.6 398.4,393.5" fill="none" stroke="#a7b4ca" stroke-width="0.6" stroke-linejoin="round" stroke-linecap="round" /><path d="M528.5,350.4 C527.4,349.1 524.1,345.3 521.9,342.8 C519.7,340.3 517.7,337.7 515.5,335.2 C513.3,332.7 511.0,330.2 508.7,327.8 C506.4,325.4 502.9,321.9 501.7,320.7" fill="none" stroke="#a7b4ca" stroke-width="0.6" stroke-linejoin="round" stroke-linecap="round" /><path d="M340.3,392.7 C339.9,394.3 339.4,399.5 337.8,402.3 C336.2,405.1 332.2,406.7 330.7,409.5 C329.2,412.3 329.4,416.0 328.8,419.3 C328.2,422.6 327.6,427.6 327.3,429.2" fill="none" stroke="#a7b4ca" stroke-width="0.6" stroke-linejoin="round" stroke-linecap="round" /><path d="M578.8,408.3 C577.4,409.2 572.9,411.6 570.5,413.9 C568.1,416.2 567.1,420.0 564.6,422.0 C562.1,424.0 558.1,424.2 555.4,426.0 C552.7,427.8 549.4,431.7 548.2,432.8" fill="none" stroke="#a7b4ca" stroke-width="0.6" stroke-linejoin="round" stroke-linecap="round" /><path d="M497.7,234.8 C496.4,233.7 492.9,229.9 490.0,228.4 C487.1,226.9 483.2,227.3 480.3,225.9 C477.4,224.5 475.0,221.9 472.3,219.9 C469.6,217.9 465.6,214.9 464.3,213.9" fill="none" stroke="#a7b4ca" stroke-width="0.6" stroke-linejoin="round" stroke-linecap="round" /><path d="M601.5,352.7 C600.9,354.3 599.2,359.0 598.0,362.1 C596.8,365.2 594.8,368.3 594.6,371.5 C594.4,374.7 595.3,378.4 596.9,381.2 C598.5,383.9 603.0,386.9 604.2,388.0" fill="none" stroke="#a7b4ca" stroke-width="0.6" stroke-linejoin="round" stroke-linecap="round" /><path d="M467.2,299.7 C467.3,301.3 467.5,306.3 468.2,309.6 C468.9,312.9 469.8,316.1 471.1,319.2 C472.4,322.2 475.0,324.8 476.0,327.9 C477.0,331.0 476.8,336.1 477.0,337.8" fill="none" stroke="#a7b4ca" stroke-width="0.6" stroke-linejoin="round" stroke-linecap="round" /><path d="M300.6,362.7 C300.8,361.0 300.5,355.7 301.6,352.7 C302.7,349.7 305.1,346.9 307.4,344.5 C309.6,342.1 312.2,339.5 315.1,338.1 C318.0,336.7 323.2,336.3 324.8,335.9" fill="none" stroke="#a7b4ca" stroke-width="0.6" stroke-linejoin="round" stroke-linecap="round" /><path d="M398.5,283.2 C396.9,283.3 391.9,283.8 388.6,283.9 C385.3,284.0 381.9,283.4 378.6,283.6 C375.3,283.8 372.0,284.3 368.7,284.9 C365.4,285.5 360.5,286.7 358.9,287.1" fill="none" stroke="#a7b4ca" stroke-width="0.6" stroke-linejoin="round" stroke-linecap="round" /><path d="M393.6,215.1 C394.4,216.6 396.6,221.2 398.6,223.8 C400.6,226.4 404.1,228.0 405.7,230.8 C407.3,233.6 407.0,237.5 408.3,240.5 C409.6,243.5 412.8,247.5 413.7,248.9" fill="none" stroke="#a7b4ca" stroke-width="0.6" stroke-linejoin="round" stroke-linecap="round" /><path d="M390.3,312.3 C391.2,313.7 394.6,317.8 395.4,320.9 C396.2,324.0 396.0,327.8 395.2,330.9 C394.4,334.0 392.6,337.2 390.6,339.8 C388.6,342.4 384.4,345.3 383.1,346.4" fill="none" stroke="#a7b4ca" stroke-width="0.6" stroke-linejoin="round" stroke-linecap="round" /><path d="M514.5,396.8 C516.1,396.3 520.8,394.3 524.0,393.7 C527.2,393.1 531.0,394.2 534.0,393.2 C537.0,392.2 539.3,389.1 542.3,387.7 C545.3,386.3 550.2,385.1 551.8,384.6" fill="none" stroke="#a7b4ca" stroke-width="0.6" stroke-linejoin="round" stroke-linecap="round" /><path d="M453.3,363.1 C452.0,362.1 448.3,358.2 445.3,357.0 C442.3,355.8 438.4,357.0 435.4,355.9 C432.4,354.8 430.3,351.4 427.3,350.1 C424.3,348.8 419.0,348.6 417.4,348.3" fill="none" stroke="#a7b4ca" stroke-width="0.6" stroke-linejoin="round" stroke-linecap="round" /><path d="M460.5,277.2 C459.6,278.6 457.5,283.4 455.0,285.5 C452.5,287.6 448.6,287.8 445.8,289.5 C443.0,291.2 440.9,294.0 438.2,295.9 C435.5,297.8 430.9,300.1 429.5,300.9" fill="none" stroke="#a7b4ca" stroke-width="0.6" stroke-linejoin="round" stroke-linecap="round" /><path d="M402.3,322.0 C401.5,323.5 398.4,327.7 397.4,330.8 C396.4,333.9 396.1,337.4 396.4,340.7 C396.6,344.0 398.9,347.2 398.9,350.4 C398.9,353.6 396.9,358.5 396.5,360.1" fill="none" stroke="#a7b4ca" stroke-width="0.6" stroke-linejoin="round" stroke-linecap="round" /><path d="M469.0,251.2 C470.7,251.2 475.7,251.4 479.0,251.3 C482.3,251.2 485.9,251.6 489.0,250.7 C492.1,249.8 495.2,248.1 497.8,246.1 C500.4,244.1 503.3,239.8 504.4,238.5" fill="none" stroke="#a7b4ca" stroke-width="0.6" stroke-linejoin="round" stroke-linecap="round" /><path d="M330.8,276.8 C332.5,277.2 337.2,279.0 340.5,279.4 C343.8,279.8 347.2,279.1 350.5,279.1 C353.8,279.1 357.4,278.7 360.5,279.6 C363.6,280.5 367.8,283.7 369.2,284.5" fill="none" stroke="#a7b4ca" stroke-width="0.6" stroke-linejoin="round" stroke-linecap="round" /><path d="M554.9,291.7 C553.4,292.5 549.0,294.8 546.2,296.6 C543.4,298.4 540.7,300.4 538.3,302.7 C535.9,305.0 533.1,307.4 531.7,310.3 C530.3,313.2 530.1,318.5 529.8,320.1" fill="none" stroke="#a7b4ca" stroke-width="0.6" stroke-linejoin="round" stroke-linecap="round" /><path d="M394.4,408.2 C395.5,409.4 399.3,412.9 401.4,415.4 C403.5,417.9 405.9,420.5 407.2,423.5 C408.5,426.5 407.9,430.2 409.0,433.3 C410.1,436.4 413.2,440.6 414.0,442.0" fill="none" stroke="#a7b4ca" stroke-width="0.6" stroke-linejoin="round" stroke-linecap="round" /><path d="M392.1,257.2 C390.9,258.2 387.4,262.3 384.5,263.6 C381.6,264.9 377.9,265.3 374.6,265.1 C371.3,264.9 367.8,263.9 364.9,262.4 C362.0,260.9 358.6,257.0 357.4,255.9" fill="none" stroke="#a7b4ca" stroke-width="0.6" stroke-linejoin="round" stroke-linecap="round" /><path d="M307.4,211.8 C307.8,210.1 308.9,205.3 309.6,202.0 C310.3,198.7 310.7,195.4 311.5,192.2 C312.3,189.0 314.4,185.8 314.4,182.6 C314.4,179.4 311.8,174.7 311.3,173.1" fill="none" stroke="#a7b4ca" stroke-width="0.6" stroke-linejoin="round" stroke-linecap="round" /><path d="M433.1,399.6 C434.4,398.6 438.0,394.6 441.0,393.4 C444.0,392.2 447.7,393.2 450.9,392.4 C454.1,391.6 457.5,390.4 460.1,388.5 C462.7,386.6 465.4,382.1 466.5,380.8" fill="none" stroke="#a7b4ca" stroke-width="0.6" stroke-linejoin="round" stroke-linecap="round" /><path d="M352.5,314.7 C352.7,313.0 352.7,307.9 353.5,304.7 C354.3,301.5 355.6,298.4 357.1,295.4 C358.6,292.4 360.2,289.4 362.3,286.9 C364.4,284.4 368.6,281.5 369.9,280.4" fill="none" stroke="#a7b4ca" stroke-width="0.6" stroke-linejoin="round" stroke-linecap="round" /><path d="M455.5,320.8 C456.9,321.7 460.8,325.0 463.8,326.4 C466.8,327.8 470.7,327.4 473.5,329.0 C476.3,330.6 478.4,333.5 480.6,336.0 C482.8,338.5 485.5,342.8 486.5,344.1" fill="none" stroke="#a7b4ca" stroke-width="0.6" stroke-linejoin="round" stroke-linecap="round" /><path d="M403.3,231.9 C403.0,233.5 402.5,238.5 401.5,241.7 C400.5,244.9 398.1,247.7 397.5,250.9 C396.9,254.1 397.1,257.8 398.1,260.9 C399.1,264.0 402.5,267.9 403.4,269.3" fill="none" stroke="#a7b4ca" stroke-width="0.6" stroke-linejoin="round" stroke-linecap="round" /><path d="M478.3,327.4 C477.5,328.8 475.1,333.3 473.2,336.0 C471.3,338.7 468.2,340.9 467.1,343.9 C466.0,346.9 466.2,350.6 466.4,353.9 C466.6,357.2 467.8,362.1 468.1,363.8" fill="none" stroke="#a7b4ca" stroke-width="0.6" stroke-linejoin="round" stroke-linecap="round" /><path d="M456.6,406.4 C456.3,404.7 455.3,399.9 454.6,396.6 C453.9,393.3 453.6,389.9 452.3,386.8 C451.1,383.8 449.2,380.8 447.1,378.3 C445.0,375.8 440.9,372.8 439.6,371.7" fill="none" stroke="#a7b4ca" stroke-width="0.6" stroke-linejoin="round" stroke-linecap="round" /><path d="M626.6,353.0 C627.0,354.6 628.0,359.5 628.7,362.8 C629.4,366.1 630.5,369.2 630.9,372.5 C631.3,375.8 630.7,379.2 630.9,382.5 C631.1,385.8 631.7,390.8 631.9,392.5" fill="none" stroke="#a7b4ca" stroke-width="0.6" stroke-linejoin="round" stroke-linecap="round" /><path d="M387.5,345.1 C388.6,344.0 392.9,340.8 394.4,338.0 C395.9,335.2 396.2,331.5 396.6,328.2 C397.0,324.9 396.9,321.5 396.8,318.2 C396.7,314.9 396.1,309.9 396.0,308.2" fill="none" stroke="#a7b4ca" stroke-width="0.6" stroke-linejoin="round" stroke-linecap="round" /><path d="M532.1,246.6 C533.0,245.2 535.8,241.0 537.6,238.2 C539.4,235.4 541.8,232.9 543.1,229.9 C544.4,226.9 543.9,223.0 545.5,220.2 C547.1,217.4 551.4,214.4 552.6,213.2" fill="none" stroke="#a7b4ca" stroke-width="0.6" stroke-linejoin="round" stroke-linecap="round" /><path d="M406.0,377.2 C406.7,378.7 409.4,383.1 410.4,386.2 C411.4,389.3 410.9,392.9 411.8,396.1 C412.7,399.3 415.2,402.1 415.6,405.3 C416.0,408.5 414.3,413.6 414.0,415.2" fill="none" stroke="#a7b4ca" stroke-width="0.6" stroke-linejoin="round" stroke-linecap="round" /><path d="M468.6,244.3 C469.0,245.9 470.6,250.7 471.2,254.0 C471.8,257.3 472.5,260.9 471.9,264.0 C471.3,267.1 468.2,269.8 467.4,272.9 C466.6,276.0 467.0,281.2 466.9,282.9" fill="none" stroke="#a7b4ca" stroke-width="0.6" stroke-linejoin="round" stroke-linecap="round" /><path d="M433.8,249.7 C435.2,248.8 440.0,246.5 442.1,244.1 C444.2,241.7 445.7,238.3 446.3,235.1 C446.9,231.9 446.0,228.4 445.5,225.1 C445.0,221.8 443.7,217.0 443.3,215.4" fill="none" stroke="#a7b4ca" stroke-width="0.6" stroke-linejoin="round" stroke-linecap="round" /><path d="M605.4,390.6 C606.2,389.1 607.9,384.1 610.1,381.7 C612.3,379.3 615.9,378.4 618.5,376.4 C621.1,374.3 623.8,372.1 625.7,369.4 C627.6,366.7 629.1,361.8 629.8,360.3" fill="none" stroke="#a7b4ca" stroke-width="0.6" stroke-linejoin="round" stroke-linecap="round" /><path d="M618.2,361.7 C619.7,362.4 624.2,364.5 627.4,365.6 C630.6,366.7 633.8,367.5 637.1,368.1 C640.4,368.7 643.8,369.1 647.1,369.1 C650.4,369.1 655.4,368.3 657.0,368.1" fill="none" stroke="#a7b4ca" stroke-width="0.6" stroke-linejoin="round" stroke-linecap="round" /><path d="M357.5,205.6 C357.5,207.3 358.4,212.5 357.5,215.6 C356.6,218.7 353.3,221.0 352.2,224.1 C351.1,227.2 352.3,231.0 351.1,234.0 C349.9,237.0 346.0,240.6 345.0,241.9" fill="none" stroke="#a7b4ca" stroke-width="0.6" stroke-linejoin="round" stroke-linecap="round" /><path d="M370.5,279.9 C371.7,278.8 375.5,275.5 377.9,273.2 C380.3,270.9 383.3,268.8 384.8,265.9 C386.3,263.0 386.2,259.4 386.9,256.1 C387.5,252.8 388.4,247.9 388.7,246.3" fill="none" stroke="#a7b4ca" stroke-width="0.6" stroke-linejoin="round" stroke-linecap="round" /><path d="M426.7,398.1 C427.6,399.5 430.8,403.7 431.7,406.8 C432.6,409.9 431.1,413.8 432.1,416.8 C433.1,419.8 435.8,422.4 437.9,425.0 C439.9,427.6 443.3,431.2 444.4,432.5" fill="none" stroke="#a7b4ca" stroke-width="0.6" stroke-linejoin="round" stroke-linecap="round" /><path d="M576.0,366.0 C577.6,365.5 582.9,364.7 585.6,363.0 C588.3,361.3 589.6,357.4 592.3,355.7 C595.0,353.9 598.8,354.0 601.8,352.5 C604.8,351.0 608.6,347.7 610.0,346.7" fill="none" stroke="#a7b4ca" stroke-width="0.6" stroke-linejoin="round" stroke-linecap="round" /><path d="M554.1,393.7 C553.6,395.3 553.0,400.6 551.3,403.3 C549.6,406.0 546.4,407.9 543.8,410.0 C541.2,412.1 538.0,413.4 535.6,415.6 C533.2,417.8 530.3,422.0 529.2,423.3" fill="none" stroke="#a7b4ca" stroke-width="0.6" stroke-linejoin="round" stroke-linecap="round" /><path d="M543.7,271.5 C544.4,273.0 547.0,277.3 547.9,280.5 C548.8,283.7 549.5,287.3 549.1,290.5 C548.7,293.7 547.0,296.8 545.5,299.8 C544.0,302.8 541.2,307.0 540.4,308.4" fill="none" stroke="#a7b4ca" stroke-width="0.6" stroke-linejoin="round" stroke-linecap="round" /><path d="M620.7,210.1 C620.9,211.7 622.5,216.8 622.0,220.0 C621.5,223.2 620.0,226.7 618.0,229.2 C616.0,231.7 612.4,232.8 609.8,234.9 C607.2,237.0 603.6,240.6 602.4,241.7" fill="none" stroke="#a7b4ca" stroke-width="0.6" stroke-linejoin="round" stroke-linecap="round" /><path d="M385.4,295.3 C383.9,294.5 379.6,291.6 376.5,290.7 C373.4,289.8 369.7,290.7 366.5,289.8 C363.3,288.9 360.2,287.2 357.5,285.4 C354.8,283.5 351.3,279.8 350.1,278.7" fill="none" stroke="#a7b4ca" stroke-width="0.6" stroke-linejoin="round" stroke-linecap="round" /><path d="M579.7,367.3 C578.2,366.5 573.9,364.0 570.8,362.8 C567.7,361.6 564.4,360.9 561.1,360.3 C557.8,359.8 554.4,360.3 551.2,359.5 C548.0,358.7 543.5,356.0 542.0,355.3" fill="none" stroke="#a7b4ca" stroke-width="0.6" stroke-linejoin="round" stroke-linecap="round" /><path d="M326.9,246.4 C326.4,244.8 325.8,239.6 324.1,236.8 C322.4,234.0 319.7,231.4 316.8,229.9 C313.9,228.4 310.2,228.7 307.0,227.9 C303.8,227.1 299.0,225.7 297.4,225.3" fill="none" stroke="#a7b4ca" stroke-width="0.6" stroke-linejoin="round" stroke-linecap="round" /><path d="M410.8,410.9 C412.4,410.6 417.5,410.3 420.7,409.4 C423.9,408.5 427.2,407.2 429.7,405.2 C432.2,403.2 434.4,400.2 435.7,397.2 C437.0,394.2 437.0,389.0 437.3,387.4" fill="none" stroke="#a7b4ca" stroke-width="0.6" stroke-linejoin="round" stroke-linecap="round" /><path d="M469.5,354.1 C468.2,355.1 464.0,357.9 461.5,360.1 C459.0,362.3 456.8,364.9 454.2,367.0 C451.6,369.1 448.9,371.1 446.0,372.7 C443.1,374.3 438.3,375.9 436.8,376.5" fill="none" stroke="#a7b4ca" stroke-width="0.6" stroke-linejoin="round" stroke-linecap="round" /><path d="M554.3,382.9 C552.9,382.0 548.2,379.7 545.9,377.4 C543.6,375.1 542.5,371.6 540.4,369.1 C538.2,366.6 535.4,364.7 533.0,362.3 C530.6,359.9 527.3,356.2 526.2,355.0" fill="none" stroke="#a7b4ca" stroke-width="0.6" stroke-linejoin="round" stroke-linecap="round" /><path d="M426.8,360.0 C427.8,361.3 430.3,365.7 432.6,368.1 C434.9,370.5 437.6,372.7 440.6,374.1 C443.6,375.5 447.5,375.0 450.4,376.4 C453.3,377.8 456.8,381.6 458.1,382.7" fill="none" stroke="#a7b4ca" stroke-width="0.6" stroke-linejoin="round" stroke-linecap="round" /><path d="M496.6,273.5 C494.9,273.6 489.9,274.0 486.6,274.2 C483.3,274.4 479.8,274.0 476.6,274.7 C473.4,275.4 470.5,277.8 467.3,278.4 C464.1,279.0 459.0,278.4 457.3,278.4" fill="none" stroke="#a7b4ca" stroke-width="0.6" stroke-linejoin="round" stroke-linecap="round" /><path d="M522.1,413.1 C523.5,414.1 528.0,416.6 530.3,418.9 C532.6,421.2 534.6,424.2 535.8,427.2 C537.0,430.2 537.7,433.9 537.4,437.1 C537.1,440.3 534.7,445.0 534.2,446.6" fill="none" stroke="#a7b4ca" stroke-width="0.6" stroke-linejoin="round" stroke-linecap="round" /><path d="M313.7,266.7 C315.3,267.3 320.5,268.3 323.0,270.3 C325.5,272.3 327.1,275.6 328.9,278.4 C330.7,281.2 333.0,284.0 333.9,287.1 C334.8,290.2 334.0,295.4 334.0,297.1" fill="none" stroke="#a7b4ca" stroke-width="0.6" stroke-linejoin="round" stroke-linecap="round" /><path d="M426.6,386.9 C425.2,387.8 421.4,391.2 418.4,392.6 C415.4,394.0 411.9,395.3 408.7,395.3 C405.5,395.3 402.3,392.8 399.1,392.7 C395.9,392.6 390.9,394.4 389.3,394.8" fill="none" stroke="#a7b4ca" stroke-width="0.6" stroke-linejoin="round" stroke-linecap="round" /><path d="M502.7,335.2 C503.3,336.7 504.4,341.8 506.2,344.5 C508.0,347.2 510.6,349.7 513.3,351.6 C516.0,353.5 519.2,354.8 522.4,355.7 C525.6,356.6 530.7,356.8 532.4,357.0" fill="none" stroke="#a7b4ca" stroke-width="0.6" stroke-linejoin="round" stroke-linecap="round" /><path d="M503.8,341.8 C505.1,342.9 508.7,346.4 511.5,348.2 C514.3,350.0 517.6,351.0 520.4,352.9 C523.1,354.8 525.1,357.7 528.0,359.3 C530.9,360.9 535.9,362.0 537.5,362.5" fill="none" stroke="#a7b4ca" stroke-width="0.6" stroke-linejoin="round" stroke-linecap="round" /><path d="M406.1,247.7 C406.7,246.1 409.2,241.5 409.5,238.3 C409.8,235.1 409.0,231.4 407.7,228.5 C406.4,225.6 403.8,223.1 401.6,220.6 C399.4,218.1 395.7,214.7 394.5,213.5" fill="none" stroke="#a7b4ca" stroke-width="0.6" stroke-linejoin="round" stroke-linecap="round" /><path d="M487.0,339.2 C488.7,339.5 493.7,340.0 496.9,340.9 C500.1,341.8 503.0,343.6 506.1,344.8 C509.2,346.0 512.4,347.2 515.7,347.8 C519.0,348.4 524.0,348.1 525.7,348.1" fill="none" stroke="#a7b4ca" stroke-width="0.6" stroke-linejoin="round" stroke-linecap="round" /><path d="M404.6,405.2 C403.8,406.7 401.2,411.0 400.0,414.1 C398.8,417.2 397.9,420.4 397.1,423.6 C396.3,426.8 396.4,430.4 395.1,433.4 C393.8,436.4 390.1,440.1 389.1,441.5" fill="none" stroke="#a7b4ca" stroke-width="0.6" stroke-linejoin="round" stroke-linecap="round" /><path d="M638.9,281.4 C638.9,283.1 638.6,288.2 639.4,291.4 C640.2,294.6 641.4,298.1 643.5,300.5 C645.6,302.9 649.7,303.6 651.9,305.9 C654.1,308.2 656.1,313.1 656.9,314.5" fill="none" stroke="#a7b4ca" stroke-width="0.6" stroke-linejoin="round" stroke-linecap="round" /><path d="M444.1,377.3 C442.4,377.5 437.5,378.1 434.2,378.6 C430.9,379.1 427.3,379.1 424.3,380.3 C421.3,381.5 418.1,383.4 416.0,385.8 C413.9,388.2 412.7,393.5 412.0,395.0" fill="none" stroke="#a7b4ca" stroke-width="0.6" stroke-linejoin="round" stroke-linecap="round" /><path d="M487.5,339.5 C488.3,338.1 490.6,333.6 492.4,330.8 C494.2,328.0 496.7,325.7 498.5,322.9 C500.3,320.1 501.7,317.0 503.3,314.1 C504.9,311.2 507.4,306.8 508.2,305.4" fill="none" stroke="#a7b4ca" stroke-width="0.6" stroke-linejoin="round" stroke-linecap="round" /><path d="M349.6,264.5 C348.3,263.5 344.6,259.8 341.6,258.5 C338.6,257.2 335.1,257.4 331.8,256.8 C328.5,256.2 325.0,256.2 321.9,255.1 C318.8,254.0 314.6,250.9 313.2,250.1" fill="none" stroke="#a7b4ca" stroke-width="0.6" stroke-linejoin="round" stroke-linecap="round" /><path d="M628.7,246.4 C629.1,248.1 631.2,252.9 631.1,256.1 C631.0,259.3 628.9,262.4 627.9,265.6 C626.9,268.8 625.0,271.9 624.9,275.1 C624.8,278.3 626.8,283.3 627.2,284.9" fill="none" stroke="#a7b4ca" stroke-width="0.6" stroke-linejoin="round" stroke-linecap="round" /><path d="M614.9,286.5 C616.4,285.7 620.7,282.8 623.9,282.0 C627.1,281.2 630.7,282.3 633.8,281.4 C636.9,280.5 639.6,277.8 642.7,276.8 C645.8,275.8 651.0,275.7 652.6,275.5" fill="none" stroke="#a7b4ca" stroke-width="0.6" stroke-linejoin="round" stroke-linecap="round" /><path d="M375.5,289.9 C376.9,289.0 381.5,286.8 383.9,284.5 C386.3,282.2 388.3,279.3 389.7,276.4 C391.1,273.4 391.8,270.1 392.5,266.8 C393.2,263.6 393.8,258.5 394.1,256.9" fill="none" stroke="#a7b4ca" stroke-width="0.6" stroke-linejoin="round" stroke-linecap="round" /><path d="M476.1,285.6 C477.6,286.3 482.3,288.2 485.0,290.1 C487.7,292.0 490.6,294.1 492.4,296.8 C494.2,299.5 494.0,303.6 495.9,306.2 C497.8,308.8 502.4,311.4 503.7,312.4" fill="none" stroke="#a7b4ca" stroke-width="0.6" stroke-linejoin="round" stroke-linecap="round" /><path d="M491.2,364.1 C492.5,365.1 496.2,368.8 499.2,370.1 C502.2,371.4 505.8,371.1 509.0,371.9 C512.2,372.7 515.4,373.9 518.5,375.0 C521.6,376.1 526.3,377.9 527.9,378.5" fill="none" stroke="#a7b4ca" stroke-width="0.6" stroke-linejoin="round" stroke-linecap="round" /><path d="M513.2,269.3 C511.7,270.0 507.0,271.8 504.0,273.2 C501.0,274.6 498.3,276.7 495.2,278.0 C492.1,279.3 488.8,279.8 485.6,280.9 C482.5,282.0 477.9,283.9 476.3,284.5" fill="none" stroke="#a7b4ca" stroke-width="0.6" stroke-linejoin="round" stroke-linecap="round" /><path d="M449.0,209.9 C447.8,208.8 444.4,205.0 441.6,203.2 C438.8,201.4 435.3,201.0 432.5,199.2 C429.7,197.4 427.1,195.1 425.0,192.5 C422.9,189.9 421.0,185.2 420.2,183.7" fill="none" stroke="#a7b4ca" stroke-width="0.6" stroke-linejoin="round" stroke-linecap="round" /><path d="M455.8,242.7 C454.5,243.7 449.9,246.2 447.8,248.7 C445.7,251.2 444.5,254.5 443.1,257.5 C441.7,260.5 439.7,263.5 439.2,266.7 C438.7,269.9 440.0,275.0 440.1,276.7" fill="none" stroke="#a7b4ca" stroke-width="0.6" stroke-linejoin="round" stroke-linecap="round" /><path d="M450.3,312.1 C451.8,312.8 456.2,315.7 459.4,316.2 C462.6,316.7 466.1,315.2 469.4,315.4 C472.7,315.6 476.1,316.2 479.2,317.4 C482.3,318.6 486.4,321.6 487.8,322.4" fill="none" stroke="#a7b4ca" stroke-width="0.6" stroke-linejoin="round" stroke-linecap="round" /><path d="M473.9,216.4 C472.3,216.6 467.2,218.1 464.0,217.6 C460.8,217.1 458.0,214.2 454.8,213.5 C451.6,212.8 448.0,214.3 444.8,213.7 C441.6,213.1 437.2,210.4 435.7,209.7" fill="none" stroke="#a7b4ca" stroke-width="0.6" stroke-linejoin="round" stroke-linecap="round" /><path d="M638.7,358.7 C638.8,357.1 638.1,351.7 639.1,348.7 C640.1,345.7 643.0,343.3 644.9,340.6 C646.8,337.9 648.1,334.4 650.6,332.4 C653.1,330.4 658.3,329.1 659.8,328.4" fill="none" stroke="#a7b4ca" stroke-width="0.6" stroke-linejoin="round" stroke-linecap="round" /><path d="M611.5,239.7 C612.6,238.5 616.8,235.2 618.3,232.4 C619.8,229.6 620.2,226.0 620.7,222.7 C621.2,219.4 620.5,215.9 621.2,212.7 C621.9,209.5 624.2,204.9 624.8,203.4" fill="none" stroke="#a7b4ca" stroke-width="0.6" stroke-linejoin="round" stroke-linecap="round" /><path d="M354.0,393.3 C353.1,394.7 349.9,398.8 348.9,401.9 C347.9,405.0 348.2,408.5 347.8,411.8 C347.4,415.1 347.9,418.8 346.7,421.8 C345.5,424.8 341.9,428.5 340.9,429.9" fill="none" stroke="#a7b4ca" stroke-width="0.6" stroke-linejoin="round" stroke-linecap="round" /><path d="M370.8,260.2 C369.2,260.5 363.9,260.6 361.0,262.0 C358.1,263.4 355.6,266.1 353.6,268.7 C351.6,271.3 350.0,274.5 349.2,277.7 C348.4,280.9 348.8,286.0 348.7,287.7" fill="none" stroke="#a7b4ca" stroke-width="0.6" stroke-linejoin="round" stroke-linecap="round" /><path d="M618.4,347.7 C619.2,346.3 621.2,341.5 623.3,339.0 C625.4,336.5 629.0,335.1 630.9,332.5 C632.8,329.9 633.4,326.4 634.7,323.3 C636.0,320.2 638.2,315.7 638.9,314.2" fill="none" stroke="#a7b4ca" stroke-width="0.6" stroke-linejoin="round" stroke-linecap="round" /><path d="M516.3,280.6 C517.6,279.4 521.2,276.0 523.8,273.9 C526.4,271.8 528.8,269.2 531.8,267.9 C534.8,266.6 538.7,267.5 541.7,266.2 C544.7,264.9 548.3,261.1 549.6,260.1" fill="none" stroke="#a7b4ca" stroke-width="0.6" stroke-linejoin="round" stroke-linecap="round" /><path d="M637.6,337.3 C636.0,337.8 631.1,338.9 628.1,340.3 C625.1,341.7 622.8,344.9 619.8,345.8 C616.8,346.7 613.1,346.0 609.8,345.8 C606.5,345.6 601.5,345.0 599.8,344.9" fill="none" stroke="#a7b4ca" stroke-width="0.6" stroke-linejoin="round" stroke-linecap="round" /><path d="M422.5,365.6 C421.3,366.7 417.9,370.5 415.2,372.4 C412.5,374.3 408.6,374.7 406.2,376.8 C403.8,378.9 403.1,382.8 400.8,385.2 C398.5,387.6 394.0,390.0 392.6,391.0" fill="none" stroke="#a7b4ca" stroke-width="0.6" stroke-linejoin="round" stroke-linecap="round" /><path d="M386.2,339.2 C387.9,339.2 392.9,339.0 396.2,339.3 C399.5,339.6 402.7,340.9 406.0,341.2 C409.3,341.5 413.0,342.0 416.0,341.0 C419.0,340.0 422.8,336.2 424.2,335.2" fill="none" stroke="#a7b4ca" stroke-width="0.6" stroke-linejoin="round" stroke-linecap="round" /><path d="M311.5,236.4 C310.2,235.4 306.1,232.3 303.5,230.3 C300.9,228.3 297.6,226.7 295.6,224.2 C293.6,221.7 293.4,217.7 291.4,215.1 C289.4,212.5 285.1,209.8 283.8,208.7" fill="none" stroke="#a7b4ca" stroke-width="0.6" stroke-linejoin="round" stroke-linecap="round" /><path d="M377.3,342.2 C378.8,341.4 383.4,339.4 386.2,337.7 C389.0,336.0 392.2,334.3 394.3,331.8 C396.4,329.3 397.6,326.0 398.8,322.9 C400.0,319.8 401.2,315.0 401.7,313.4" fill="none" stroke="#a7b4ca" stroke-width="0.6" stroke-linejoin="round" stroke-linecap="round" /><path d="M376.2,327.6 C374.6,327.2 369.7,326.4 366.5,325.5 C363.3,324.6 360.2,323.2 357.1,322.1 C354.0,321.0 350.8,319.2 347.6,318.9 C344.4,318.5 339.4,319.8 337.7,320.0" fill="none" stroke="#a7b4ca" stroke-width="0.6" stroke-linejoin="round" stroke-linecap="round" /><path d="M618.4,256.2 C619.9,256.9 624.5,258.8 627.4,260.5 C630.3,262.2 633.4,263.9 635.6,266.3 C637.8,268.7 639.3,272.0 640.4,275.1 C641.5,278.2 641.8,283.3 642.1,284.9" fill="none" stroke="#a7b4ca" stroke-width="0.6" stroke-linejoin="round" stroke-linecap="round" /><path d="M436.7,260.5 C438.3,260.9 443.2,262.0 446.4,262.9 C449.6,263.8 452.7,265.3 455.9,266.1 C459.1,266.9 462.6,266.8 465.8,267.5 C469.0,268.2 473.7,270.1 475.3,270.6" fill="none" stroke="#a7b4ca" stroke-width="0.6" stroke-linejoin="round" stroke-linecap="round" /><path d="M450.9,401.8 C450.2,400.3 447.4,395.8 446.9,392.6 C446.4,389.4 448.3,385.8 447.7,382.6 C447.1,379.5 444.6,376.7 443.2,373.7 C441.8,370.7 439.7,366.1 439.0,364.6" fill="none" stroke="#a7b4ca" stroke-width="0.6" stroke-linejoin="round" stroke-linecap="round" /><path d="M438.0,254.9 C439.3,256.0 442.8,260.1 445.7,261.4 C448.6,262.7 452.3,262.0 455.6,262.5 C458.9,263.0 462.6,262.9 465.5,264.3 C468.4,265.7 471.8,269.7 473.1,270.8" fill="none" stroke="#a7b4ca" stroke-width="0.6" stroke-linejoin="round" stroke-linecap="round" /><path d="M348.4,246.9 C347.1,245.8 343.0,242.9 340.6,240.6 C338.2,238.3 335.7,235.8 334.1,233.0 C332.5,230.2 332.5,226.4 330.8,223.6 C329.1,220.8 325.2,217.3 324.1,216.1" fill="none" stroke="#a7b4ca" stroke-width="0.6" stroke-linejoin="round" stroke-linecap="round" /><path d="M405.2,268.1 C406.4,269.2 410.5,272.3 412.4,275.0 C414.3,277.7 415.7,280.9 416.8,284.0 C417.9,287.1 417.3,291.0 418.8,293.8 C420.3,296.6 424.7,299.6 425.9,300.8" fill="none" stroke="#a7b4ca" stroke-width="0.6" stroke-linejoin="round" stroke-linecap="round" /><path d="M587.1,361.5 C585.4,361.4 580.4,360.9 577.1,360.8 C573.8,360.7 570.4,360.1 567.1,360.6 C563.9,361.1 560.4,362.0 557.6,363.7 C554.9,365.4 551.8,369.6 550.6,370.8" fill="none" stroke="#a7b4ca" stroke-width="0.6" stroke-linejoin="round" stroke-linecap="round" /><path d="M379.0,213.2 C377.8,214.3 374.3,217.9 371.6,219.8 C368.9,221.7 365.9,223.7 362.8,224.6 C359.7,225.5 356.1,225.6 352.8,225.5 C349.5,225.4 344.6,224.1 343.0,223.8" fill="none" stroke="#a7b4ca" stroke-width="0.6" stroke-linejoin="round" stroke-linecap="round" /><path d="M390.4,321.3 C388.8,321.4 383.8,321.8 380.5,321.9 C377.2,322.0 373.8,321.6 370.5,322.1 C367.2,322.7 364.1,324.4 360.9,325.2 C357.6,325.9 352.6,326.4 351.0,326.6" fill="none" stroke="#a7b4ca" stroke-width="0.6" stroke-linejoin="round" stroke-linecap="round" /><path d="M628.1,250.6 C628.5,248.9 630.2,244.1 630.5,240.8 C630.8,237.5 630.7,234.1 630.0,230.9 C629.3,227.7 627.1,224.7 626.4,221.5 C625.7,218.3 625.7,213.2 625.6,211.6" fill="none" stroke="#a7b4ca" stroke-width="0.6" stroke-linejoin="round" stroke-linecap="round" /><path d="M621.2,361.7 C619.8,362.7 615.6,365.4 613.1,367.6 C610.6,369.8 608.2,372.2 606.4,375.0 C604.6,377.8 604.4,381.6 602.4,384.2 C600.4,386.8 595.8,389.3 594.5,390.3" fill="none" stroke="#a7b4ca" stroke-width="0.6" stroke-linejoin="round" stroke-linecap="round" /><path d="M514.4,350.5 C514.5,348.8 514.8,343.8 514.9,340.5 C515.0,337.2 514.2,333.7 514.9,330.5 C515.6,327.3 517.2,324.2 518.9,321.3 C520.6,318.4 524.0,314.7 525.0,313.4" fill="none" stroke="#a7b4ca" stroke-width="0.6" stroke-linejoin="round" stroke-linecap="round" /><path d="M591.6,296.8 C591.4,295.1 591.4,290.1 590.8,286.8 C590.2,283.5 589.3,280.2 587.8,277.3 C586.3,274.4 583.5,272.2 581.7,269.4 C579.9,266.6 577.7,262.1 576.9,260.6" fill="none" stroke="#a7b4ca" stroke-width="0.6" stroke-linejoin="round" stroke-linecap="round" /><path d="M326.5,396.3 C328.0,396.8 332.7,399.3 335.9,399.6 C339.1,399.9 342.6,397.9 345.8,398.3 C349.0,398.7 351.9,401.1 355.1,402.0 C358.3,402.9 363.3,403.7 364.9,404.0" fill="none" stroke="#a7b4ca" stroke-width="0.6" stroke-linejoin="round" stroke-linecap="round" /><path d="M348.2,211.0 C349.7,211.8 354.2,214.0 357.0,215.8 C359.8,217.6 362.6,219.5 365.0,221.8 C367.4,224.1 369.6,226.8 371.3,229.6 C373.0,232.4 374.5,237.3 375.1,238.8" fill="none" stroke="#a7b4ca" stroke-width="0.6" stroke-linejoin="round" stroke-linecap="round" /><path d="M322.4,329.0 C320.9,329.8 316.6,332.7 313.5,333.6 C310.4,334.5 306.7,334.9 303.5,334.5 C300.3,334.1 297.4,331.3 294.2,330.9 C291.0,330.5 285.9,332.1 284.3,332.3" fill="none" stroke="#a7b4ca" stroke-width="0.6" stroke-linejoin="round" stroke-linecap="round" /><path d="M595.0,397.0 C596.2,395.8 600.1,392.5 601.9,389.7 C603.7,386.9 605.2,383.7 605.7,380.5 C606.2,377.3 606.1,373.5 605.0,370.5 C603.9,367.5 600.2,363.8 599.2,362.4" fill="none" stroke="#a7b4ca" stroke-width="0.6" stroke-linejoin="round" stroke-linecap="round" /><path d="M588.2,375.5 C587.7,374.0 585.8,369.3 584.9,366.1 C584.0,362.9 584.1,359.5 583.1,356.3 C582.1,353.1 580.9,349.7 578.9,347.2 C576.9,344.7 572.3,342.1 571.0,341.1" fill="none" stroke="#a7b4ca" stroke-width="0.6" stroke-linejoin="round" stroke-linecap="round" /><path d="M333.3,364.0 C334.1,365.5 336.4,370.0 338.1,372.8 C339.8,375.6 341.2,379.1 343.6,381.1 C346.1,383.2 349.6,384.2 352.8,385.1 C356.0,386.0 361.1,386.0 362.8,386.2" fill="none" stroke="#a7b4ca" stroke-width="0.6" stroke-linejoin="round" stroke-linecap="round" /><path d="M396.1,355.3 C395.3,356.8 393.4,361.8 391.1,364.0 C388.8,366.2 385.1,367.1 382.2,368.6 C379.2,370.2 376.5,372.4 373.4,373.3 C370.3,374.2 365.1,373.8 363.4,373.9" fill="none" stroke="#a7b4ca" stroke-width="0.6" stroke-linejoin="round" stroke-linecap="round" /><path d="M510.2,211.5 C508.9,212.5 505.1,215.8 502.1,217.3 C499.1,218.8 495.6,219.0 492.5,220.3 C489.4,221.6 486.8,223.8 483.7,224.9 C480.6,226.1 475.5,226.8 473.9,227.2" fill="none" stroke="#a7b4ca" stroke-width="0.6" stroke-linejoin="round" stroke-linecap="round" /><path d="M482.9,250.5 C483.2,248.9 483.7,243.7 485.0,240.7 C486.3,237.7 489.3,235.4 490.6,232.4 C491.9,229.4 492.9,225.8 492.6,222.6 C492.3,219.4 489.4,214.9 488.8,213.4" fill="none" stroke="#a7b4ca" stroke-width="0.6" stroke-linejoin="round" stroke-linecap="round" /><path d="M368.7,365.1 C369.9,363.9 373.6,360.6 376.1,358.4 C378.6,356.2 381.1,353.9 383.5,351.6 C385.9,349.3 388.1,346.5 390.8,344.7 C393.6,342.9 398.5,341.4 400.0,340.8" fill="none" stroke="#a7b4ca" stroke-width="0.6" stroke-linejoin="round" stroke-linecap="round" /><path d="M362.7,308.9 C361.3,309.8 356.8,312.1 354.3,314.2 C351.8,316.3 350.4,319.9 347.7,321.7 C345.0,323.5 341.2,323.4 338.2,324.8 C335.2,326.2 331.2,329.4 329.8,330.3" fill="none" stroke="#a7b4ca" stroke-width="0.6" stroke-linejoin="round" stroke-linecap="round" /><path d="M373.0,351.9 C371.5,352.7 367.2,355.2 364.1,356.5 C361.0,357.8 357.3,357.9 354.6,359.6 C351.9,361.3 350.4,364.9 347.8,366.9 C345.2,368.9 340.4,370.6 338.9,371.4" fill="none" stroke="#a7b4ca" stroke-width="0.6" stroke-linejoin="round" stroke-linecap="round" /><path d="M537.0,370.3 C535.7,369.3 531.8,366.2 529.0,364.4 C526.2,362.6 523.2,360.9 520.2,359.5 C517.2,358.1 513.6,357.6 511.0,355.7 C508.4,353.8 505.5,349.4 504.4,348.2" fill="none" stroke="#a7b4ca" stroke-width="0.6" stroke-linejoin="round" stroke-linecap="round" /><path d="M329.3,391.6 C330.9,391.2 336.0,390.7 339.1,389.6 C342.2,388.5 344.9,385.8 348.0,385.0 C351.1,384.2 354.7,385.1 358.0,385.1 C361.3,385.1 366.3,385.1 368.0,385.1" fill="none" stroke="#a7b4ca" stroke-width="0.6" stroke-linejoin="round" stroke-linecap="round" /><path d="M429.0,390.6 C429.2,392.3 430.1,397.2 430.5,400.5 C430.9,403.8 431.7,407.2 431.6,410.5 C431.5,413.8 430.8,417.2 429.7,420.3 C428.6,423.4 425.7,427.6 424.9,429.1" fill="none" stroke="#a7b4ca" stroke-width="0.6" stroke-linejoin="round" stroke-linecap="round" /><path d="M519.7,278.2 C519.6,279.9 520.0,285.1 519.1,288.2 C518.2,291.3 516.2,294.2 514.4,297.0 C512.6,299.8 510.6,302.6 508.2,304.8 C505.8,307.1 501.4,309.6 500.0,310.5" fill="none" stroke="#a7b4ca" stroke-width="0.6" stroke-linejoin="round" stroke-linecap="round" /><path d="M357.6,297.1 C358.0,295.5 359.9,290.6 360.0,287.4 C360.1,284.2 358.8,280.9 358.0,277.7 C357.2,274.5 355.6,271.2 355.5,268.0 C355.4,264.8 357.2,259.8 357.6,258.2" fill="none" stroke="#a7b4ca" stroke-width="0.6" stroke-linejoin="round" stroke-linecap="round" /><path d="M380.9,245.2 C380.0,246.6 377.8,251.4 375.5,253.7 C373.2,256.0 369.5,256.9 367.2,259.2 C364.9,261.5 363.0,264.6 361.9,267.7 C360.8,270.8 360.6,276.0 360.3,277.6" fill="none" stroke="#a7b4ca" stroke-width="0.6" stroke-linejoin="round" stroke-linecap="round" /><path d="M384.2,273.6 C382.6,274.0 377.6,275.0 374.5,276.2 C371.4,277.4 368.2,278.8 365.6,280.8 C363.0,282.8 361.7,286.6 359.0,288.3 C356.3,290.0 351.0,290.6 349.4,291.0" fill="none" stroke="#a7b4ca" stroke-width="0.6" stroke-linejoin="round" stroke-linecap="round" /><path d="M547.8,226.4 C549.0,225.3 552.9,222.1 555.3,219.8 C557.7,217.5 559.2,214.0 561.9,212.3 C564.6,210.6 568.2,209.9 571.5,209.6 C574.8,209.3 579.8,210.3 581.5,210.4" fill="none" stroke="#a7b4ca" stroke-width="0.6" stroke-linejoin="round" stroke-linecap="round" /><path d="M549.3,296.3 C549.6,298.0 549.7,303.2 551.0,306.2 C552.3,309.2 554.6,312.0 557.0,314.2 C559.4,316.4 562.5,318.0 565.4,319.6 C568.3,321.2 573.0,323.2 574.5,323.9" fill="none" stroke="#a7b4ca" stroke-width="0.6" stroke-linejoin="round" stroke-linecap="round" /><path d="M311.5,288.8 C312.3,287.3 314.6,282.9 316.2,280.0 C317.8,277.1 319.2,273.9 321.0,271.1 C322.8,268.3 325.1,265.9 327.0,263.2 C328.9,260.5 331.8,256.4 332.7,255.0" fill="none" stroke="#a7b4ca" stroke-width="0.6" stroke-linejoin="round" stroke-linecap="round" /><path d="M348.2,331.8 C346.6,332.3 341.9,334.6 338.7,334.8 C335.5,335.0 332.2,333.4 328.9,333.0 C325.6,332.6 322.2,332.6 318.9,332.1 C315.6,331.6 310.7,330.5 309.1,330.2" fill="none" stroke="#a7b4ca" stroke-width="0.6" stroke-linejoin="round" stroke-linecap="round" /><path d="M554.7,293.4 C554.5,295.1 554.5,300.4 553.4,303.4 C552.3,306.4 550.0,309.3 547.8,311.7 C545.5,314.1 542.8,316.1 539.9,317.8 C537.0,319.5 532.2,321.1 530.7,321.8" fill="none" stroke="#a7b4ca" stroke-width="0.6" stroke-linejoin="round" stroke-linecap="round" /><path d="M589.8,347.7 C588.7,346.5 585.6,342.5 583.1,340.3 C580.6,338.1 577.5,336.7 574.9,334.6 C572.3,332.5 570.5,329.3 567.7,327.7 C564.9,326.1 559.7,325.4 558.1,324.9" fill="none" stroke="#a7b4ca" stroke-width="0.6" stroke-linejoin="round" stroke-linecap="round" /><path d="M442.7,369.3 C442.5,367.6 442.6,362.5 441.9,359.3 C441.2,356.1 439.6,353.0 438.2,350.0 C436.8,347.0 435.3,344.0 433.7,341.1 C432.1,338.2 429.5,333.8 428.7,332.4" fill="none" stroke="#a7b4ca" stroke-width="0.6" stroke-linejoin="round" stroke-linecap="round" /><path d="M812.4,227.5 C812.5,225.8 813.4,220.7 812.9,217.5 C812.4,214.3 810.1,209.7 809.6,208.1" fill="none" stroke="#b3bdd4" stroke-width="0.6" stroke-linejoin="round" stroke-linecap="round" /><path d="M825.3,247.8 C824.0,248.9 820.6,253.0 817.7,254.3 C814.8,255.6 809.4,255.5 807.8,255.7" fill="none" stroke="#b3bdd4" stroke-width="0.6" stroke-linejoin="round" stroke-linecap="round" /><path d="M584.9,234.9 C585.2,236.5 587.2,241.4 587.1,244.6 C587.0,247.8 584.6,252.6 584.1,254.2" fill="none" stroke="#b3bdd4" stroke-width="0.6" stroke-linejoin="round" stroke-linecap="round" /><path d="M772.5,210.6 C771.0,209.7 766.4,207.6 763.8,205.6 C761.2,203.6 757.9,199.8 756.7,198.6" fill="none" stroke="#b3bdd4" stroke-width="0.6" stroke-linejoin="round" stroke-linecap="round" /><path d="M769.8,240.2 C770.6,238.7 773.2,234.5 774.7,231.5 C776.2,228.5 778.1,223.8 778.8,222.3" fill="none" stroke="#b3bdd4" stroke-width="0.6" stroke-linejoin="round" stroke-linecap="round" /><path d="M939.7,216.6 C938.9,215.1 935.8,211.1 934.6,208.0 C933.4,204.9 932.7,199.8 932.3,198.2" fill="none" stroke="#b3bdd4" stroke-width="0.6" stroke-linejoin="round" stroke-linecap="round" /><path d="M617.7,259.1 C617.5,260.8 616.4,265.8 616.4,269.1 C616.4,272.4 617.6,277.4 617.8,279.0" fill="none" stroke="#b3bdd4" stroke-width="0.6" stroke-linejoin="round" stroke-linecap="round" /><path d="M725.9,205.7 C724.5,206.7 720.6,209.9 717.7,211.4 C714.8,212.9 709.9,214.4 708.3,215.0" fill="none" stroke="#b3bdd4" stroke-width="0.6" stroke-linejoin="round" stroke-linecap="round" /><path d="M707.3,219.6 C707.1,221.2 707.2,226.5 706.0,229.5 C704.8,232.5 700.9,236.1 699.9,237.4" fill="none" stroke="#b3bdd4" stroke-width="0.6" stroke-linejoin="round" stroke-linecap="round" /><path d="M775.6,217.0 C775.9,215.4 777.4,210.5 777.5,207.2 C777.6,203.9 776.2,199.0 776.0,197.3" fill="none" stroke="#b3bdd4" stroke-width="0.6" stroke-linejoin="round" stroke-linecap="round" /><path d="M620.4,247.7 C621.3,246.3 623.9,242.0 625.5,239.1 C627.1,236.2 629.5,231.8 630.3,230.3" fill="none" stroke="#b3bdd4" stroke-width="0.6" stroke-linejoin="round" stroke-linecap="round" /><path d="M789.2,217.4 C790.7,216.8 795.3,214.5 798.4,213.5 C801.5,212.5 806.5,211.6 808.1,211.2" fill="none" stroke="#b3bdd4" stroke-width="0.6" stroke-linejoin="round" stroke-linecap="round" /><path d="M889.3,249.9 C887.8,250.6 883.4,252.8 880.3,254.2 C877.2,255.6 872.5,257.4 871.0,258.0" fill="none" stroke="#b3bdd4" stroke-width="0.6" stroke-linejoin="round" stroke-linecap="round" /><path d="M618.8,250.9 C617.3,251.6 612.7,253.7 610.0,255.6 C607.3,257.5 604.0,261.4 602.8,262.5" fill="none" stroke="#b3bdd4" stroke-width="0.6" stroke-linejoin="round" stroke-linecap="round" /><path d="M716.7,218.9 C715.6,220.2 711.3,223.5 710.0,226.4 C708.7,229.3 708.9,234.7 708.7,236.3" fill="none" stroke="#b3bdd4" stroke-width="0.6" stroke-linejoin="round" stroke-linecap="round" /><path d="M851.5,220.5 C851.9,222.1 853.3,226.9 854.2,230.1 C855.1,233.3 856.6,238.1 857.1,239.7" fill="none" stroke="#b3bdd4" stroke-width="0.6" stroke-linejoin="round" stroke-linecap="round" /><path d="M737.1,240.1 C736.0,238.8 731.9,235.5 730.4,232.6 C728.9,229.7 728.6,224.5 728.2,222.9" fill="none" stroke="#b3bdd4" stroke-width="0.6" stroke-linejoin="round" stroke-linecap="round" /><path d="M903.2,208.1 C904.6,207.2 908.5,203.9 911.5,202.5 C914.5,201.1 919.6,200.4 921.2,200.0" fill="none" stroke="#b3bdd4" stroke-width="0.6" stroke-linejoin="round" stroke-linecap="round" /><path d="M624.8,250.7 C623.1,250.3 618.3,248.1 615.1,248.2 C611.9,248.3 607.2,250.9 605.6,251.5" fill="none" stroke="#b3bdd4" stroke-width="0.6" stroke-linejoin="round" stroke-linecap="round" /><path d="M941.2,241.1 C942.0,242.6 943.7,247.5 945.8,250.0 C947.9,252.5 952.4,255.1 953.7,256.1" fill="none" stroke="#b3bdd4" stroke-width="0.6" stroke-linejoin="round" stroke-linecap="round" /><path d="M661.1,247.7 C660.8,249.3 660.6,254.6 659.2,257.5 C657.8,260.4 654.0,264.0 653.0,265.3" fill="none" stroke="#b3bdd4" stroke-width="0.6" stroke-linejoin="round" stroke-linecap="round" /><path d="M878.8,214.2 C880.2,213.4 884.3,210.2 887.3,209.0 C890.3,207.8 895.4,207.2 897.0,206.8" fill="none" stroke="#b3bdd4" stroke-width="0.6" stroke-linejoin="round" stroke-linecap="round" /><path d="M830.7,254.2 C831.7,252.8 835.2,249.1 836.7,246.2 C838.2,243.3 839.0,238.2 839.5,236.6" fill="none" stroke="#b3bdd4" stroke-width="0.6" stroke-linejoin="round" stroke-linecap="round" /><path d="M840.2,234.2 C840.0,232.5 838.6,227.5 838.9,224.3 C839.2,221.1 841.7,216.4 842.2,214.8" fill="none" stroke="#b3bdd4" stroke-width="0.6" stroke-linejoin="round" stroke-linecap="round" /><path d="M786.5,219.5 C787.3,221.0 789.8,225.3 791.5,228.2 C793.2,231.1 795.8,235.3 796.7,236.7" fill="none" stroke="#b3bdd4" stroke-width="0.6" stroke-linejoin="round" stroke-linecap="round" /><path d="M592.8,230.7 C593.8,232.0 596.9,235.9 599.0,238.5 C601.1,241.1 604.2,245.0 605.3,246.3" fill="none" stroke="#b3bdd4" stroke-width="0.6" stroke-linejoin="round" stroke-linecap="round" /><path d="M780.4,252.5 C781.9,253.2 786.4,255.4 789.4,256.8 C792.4,258.2 797.1,260.1 798.6,260.8" fill="none" stroke="#b3bdd4" stroke-width="0.6" stroke-linejoin="round" stroke-linecap="round" /><path d="M789.4,241.6 C790.1,240.1 792.3,235.6 793.5,232.5 C794.7,229.4 796.1,224.6 796.6,223.0" fill="none" stroke="#b3bdd4" stroke-width="0.6" stroke-linejoin="round" stroke-linecap="round" /><path d="M944.6,209.1 C943.8,207.7 941.8,202.8 939.4,200.6 C937.0,198.4 932.0,196.9 930.5,196.2" fill="none" stroke="#b3bdd4" stroke-width="0.6" stroke-linejoin="round" stroke-linecap="round" /><path d="M807.8,242.5 C809.1,241.6 812.8,237.7 815.8,236.6 C818.8,235.5 824.1,236.2 825.8,236.1" fill="none" stroke="#b3bdd4" stroke-width="0.6" stroke-linejoin="round" stroke-linecap="round" /><path d="M769.1,231.7 C769.7,230.1 771.1,225.2 772.7,222.3 C774.3,219.4 777.6,215.5 778.6,214.2" fill="none" stroke="#b3bdd4" stroke-width="0.6" stroke-linejoin="round" stroke-linecap="round" /><path d="M813.9,223.6 C814.7,222.2 817.3,218.0 819.0,215.1 C820.7,212.2 823.1,207.8 823.9,206.3" fill="none" stroke="#b3bdd4" stroke-width="0.6" stroke-linejoin="round" stroke-linecap="round" /><path d="M775.0,247.4 C775.5,249.0 776.9,253.8 778.1,256.9 C779.3,260.0 781.5,264.5 782.2,266.0" fill="none" stroke="#b3bdd4" stroke-width="0.6" stroke-linejoin="round" stroke-linecap="round" /><path d="M786.1,250.5 C785.0,251.8 781.8,255.7 779.9,258.4 C778.0,261.1 775.6,265.5 774.7,266.9" fill="none" stroke="#b3bdd4" stroke-width="0.6" stroke-linejoin="round" stroke-linecap="round" /><path d="M766.5,219.9 C765.1,219.0 760.8,216.3 758.3,214.2 C755.8,212.1 752.5,208.3 751.3,207.1" fill="none" stroke="#b3bdd4" stroke-width="0.6" stroke-linejoin="round" stroke-linecap="round" /><path d="M878.9,223.2 C878.6,224.8 877.9,229.8 877.1,233.0 C876.3,236.2 874.8,241.0 874.3,242.6" fill="none" stroke="#b3bdd4" stroke-width="0.6" stroke-linejoin="round" stroke-linecap="round" /><path d="M817.6,248.1 C819.0,249.0 823.9,250.9 826.3,253.1 C828.7,255.3 830.9,260.0 831.8,261.4" fill="none" stroke="#b3bdd4" stroke-width="0.6" stroke-linejoin="round" stroke-linecap="round" /><path d="M782.7,207.7 C783.2,209.3 783.9,214.5 785.4,217.4 C786.9,220.3 790.5,224.0 791.5,225.3" fill="none" stroke="#b3bdd4" stroke-width="0.6" stroke-linejoin="round" stroke-linecap="round" /><path d="M929.4,238.5 C929.0,236.8 927.1,231.9 927.1,228.7 C927.1,225.5 929.2,220.7 929.6,219.1" fill="none" stroke="#b3bdd4" stroke-width="0.6" stroke-linejoin="round" stroke-linecap="round" /><path d="M808.6,238.9 C807.7,237.5 805.0,233.3 803.5,230.3 C802.0,227.3 800.0,222.7 799.3,221.2" fill="none" stroke="#b3bdd4" stroke-width="0.6" stroke-linejoin="round" stroke-linecap="round" /><path d="M835.6,216.7 C834.7,215.3 831.5,211.3 830.2,208.3 C828.9,205.3 828.0,200.2 827.6,198.6" fill="none" stroke="#b3bdd4" stroke-width="0.6" stroke-linejoin="round" stroke-linecap="round" /><path d="M609.5,215.0 C610.9,215.9 615.8,218.0 618.0,220.3 C620.2,222.6 622.1,227.6 622.9,229.0" fill="none" stroke="#b3bdd4" stroke-width="0.6" stroke-linejoin="round" stroke-linecap="round" /><path d="M825.7,225.3 C826.9,224.1 830.4,220.5 832.9,218.3 C835.4,216.1 839.3,213.0 840.6,211.9" fill="none" stroke="#b3bdd4" stroke-width="0.6" stroke-linejoin="round" stroke-linecap="round" /><path d="M670.6,221.6 C669.4,222.7 665.4,225.8 663.0,228.1 C660.6,230.4 657.2,234.0 656.0,235.2" fill="none" stroke="#b3bdd4" stroke-width="0.6" stroke-linejoin="round" stroke-linecap="round" /><path d="M820.3,256.4 C821.8,257.1 826.2,260.0 829.4,260.5 C832.6,261.0 837.6,259.4 839.3,259.2" fill="none" stroke="#b3bdd4" stroke-width="0.6" stroke-linejoin="round" stroke-linecap="round" /><path d="M616.4,249.6 C615.4,248.2 612.7,244.0 610.7,241.3 C608.7,238.6 605.6,234.7 604.6,233.4" fill="none" stroke="#b3bdd4" stroke-width="0.6" stroke-linejoin="round" stroke-linecap="round" /><path d="M575.5,226.3 C574.8,224.8 571.6,220.5 571.0,217.4 C570.4,214.3 571.9,209.1 572.1,207.4" fill="none" stroke="#b3bdd4" stroke-width="0.6" stroke-linejoin="round" stroke-linecap="round" /><path d="M755.4,227.7 C756.6,228.9 759.7,233.0 762.3,235.0 C764.9,237.0 769.7,238.8 771.2,239.5" fill="none" stroke="#b3bdd4" stroke-width="0.6" stroke-linejoin="round" stroke-linecap="round" /><path d="M629.2,205.9 C630.8,206.3 635.6,208.2 638.9,208.3 C642.2,208.4 647.1,206.6 648.7,206.3" fill="none" stroke="#b3bdd4" stroke-width="0.6" stroke-linejoin="round" stroke-linecap="round" /><path d="M946.9,209.8 C947.4,208.3 949.8,203.5 949.9,200.3 C950.0,197.1 947.7,192.3 947.2,190.7" fill="none" stroke="#b3bdd4" stroke-width="0.6" stroke-linejoin="round" stroke-linecap="round" /><path d="M850.5,218.3 C849.8,216.8 848.1,211.8 845.9,209.4 C843.7,207.0 838.8,205.1 837.4,204.2" fill="none" stroke="#b3bdd4" stroke-width="0.6" stroke-linejoin="round" stroke-linecap="round" /><path d="M871.9,244.2 C873.2,243.3 877.8,240.8 879.9,238.3 C882.0,235.8 883.5,230.8 884.2,229.3" fill="none" stroke="#b3bdd4" stroke-width="0.6" stroke-linejoin="round" stroke-linecap="round" /><path d="M815.2,244.0 C813.6,243.6 808.8,241.7 805.5,241.3 C802.2,240.9 797.2,241.6 795.5,241.6" fill="none" stroke="#b3bdd4" stroke-width="0.6" stroke-linejoin="round" stroke-linecap="round" /><path d="M946.1,244.4 C947.5,243.6 951.8,241.0 954.8,239.6 C957.8,238.2 962.7,236.9 964.3,236.3" fill="none" stroke="#b3bdd4" stroke-width="0.6" stroke-linejoin="round" stroke-linecap="round" /><path d="M888.8,209.4 C887.7,210.7 884.0,214.4 882.6,217.3 C881.2,220.2 880.5,225.4 880.1,227.0" fill="none" stroke="#b3bdd4" stroke-width="0.6" stroke-linejoin="round" stroke-linecap="round" /><path d="M905.8,231.7 C907.4,232.1 912.3,233.0 915.5,233.9 C918.7,234.8 923.5,236.4 925.1,236.9" fill="none" stroke="#b3bdd4" stroke-width="0.6" stroke-linejoin="round" stroke-linecap="round" /><path d="M741.1,242.2 C741.6,243.8 742.9,248.7 744.1,251.8 C745.3,254.9 747.9,259.2 748.6,260.7" fill="none" stroke="#b3bdd4" stroke-width="0.6" stroke-linejoin="round" stroke-linecap="round" /><path d="M821.5,239.6 C820.2,240.6 816.5,244.2 813.6,245.7 C810.7,247.2 805.6,248.2 804.0,248.7" fill="none" stroke="#b3bdd4" stroke-width="0.6" stroke-linejoin="round" stroke-linecap="round" /><path d="M938.5,248.2 C936.9,247.9 931.9,246.2 928.7,246.5 C925.5,246.8 920.9,249.3 919.3,249.9" fill="none" stroke="#b3bdd4" stroke-width="0.6" stroke-linejoin="round" stroke-linecap="round" /><path d="M949.8,243.7 C950.3,242.1 951.6,237.2 952.7,234.1 C953.8,231.0 956.0,226.4 956.7,224.9" fill="none" stroke="#b3bdd4" stroke-width="0.6" stroke-linejoin="round" stroke-linecap="round" /><path d="M668.4,393.9 C666.9,393.3 662.3,391.2 659.2,390.0 C656.1,388.8 651.3,387.3 649.7,386.8" fill="none" stroke="#b3bdd4" stroke-width="0.6" stroke-linejoin="round" stroke-linecap="round" /><path d="M662.2,337.1 C661.7,335.5 659.5,330.7 659.3,327.5 C659.1,324.3 660.9,319.3 661.2,317.7" fill="none" stroke="#b3bdd4" stroke-width="0.6" stroke-linejoin="round" stroke-linecap="round" /><path d="M656.5,325.4 C658.1,325.0 663.0,323.8 666.2,322.7 C669.4,321.6 674.0,319.7 675.5,319.1" fill="none" stroke="#b3bdd4" stroke-width="0.6" stroke-linejoin="round" stroke-linecap="round" /><path d="M641.1,392.0 C641.6,390.4 642.6,385.3 644.2,382.5 C645.8,379.7 649.6,376.2 650.7,374.9" fill="none" stroke="#b3bdd4" stroke-width="0.6" stroke-linejoin="round" stroke-linecap="round" /><path d="M656.8,398.4 C655.2,398.1 650.0,397.9 647.0,396.6 C644.0,395.3 640.1,391.8 638.7,390.9" fill="none" stroke="#b3bdd4" stroke-width="0.6" stroke-linejoin="round" stroke-linecap="round" /><path d="M656.5,375.6 C657.7,374.5 662.2,371.6 664.0,368.9 C665.8,366.2 666.8,361.1 667.4,359.5" fill="none" stroke="#b3bdd4" stroke-width="0.6" stroke-linejoin="round" stroke-linecap="round" /><path d="M638.8,389.7 C638.8,391.3 639.7,396.6 638.9,399.7 C638.1,402.8 634.8,406.9 634.0,408.4" fill="none" stroke="#b3bdd4" stroke-width="0.6" stroke-linejoin="round" stroke-linecap="round" /><path d="M616.4,365.9 C615.6,364.4 613.6,359.7 611.6,357.1 C609.6,354.5 605.4,351.6 604.1,350.5" fill="none" stroke="#b3bdd4" stroke-width="0.6" stroke-linejoin="round" stroke-linecap="round" /><path d="M617.8,383.9 C618.2,382.3 620.0,377.3 619.9,374.1 C619.8,370.9 617.7,366.1 617.2,364.5" fill="none" stroke="#b3bdd4" stroke-width="0.6" stroke-linejoin="round" stroke-linecap="round" /><path d="M656.5,386.5 C656.5,388.2 657.3,393.3 656.6,396.5 C655.9,399.7 652.9,404.0 652.1,405.5" fill="none" stroke="#b3bdd4" stroke-width="0.6" stroke-linejoin="round" stroke-linecap="round" /><path d="M662.0,355.2 C660.3,355.3 655.2,354.9 652.0,355.6 C648.8,356.3 644.3,358.9 642.8,359.6" fill="none" stroke="#b3bdd4" stroke-width="0.6" stroke-linejoin="round" stroke-linecap="round" /><path d="M613.5,312.6 C612.7,311.1 610.3,306.7 608.9,303.7 C607.5,300.7 605.7,295.9 605.1,294.4" fill="none" stroke="#b3bdd4" stroke-width="0.6" stroke-linejoin="round" stroke-linecap="round" /><path d="M628.2,354.7 C629.7,355.3 634.9,356.5 637.4,358.5 C639.9,360.5 642.0,365.4 642.9,366.8" fill="none" stroke="#b3bdd4" stroke-width="0.6" stroke-linejoin="round" stroke-linecap="round" /><path d="M626.2,303.3 C625.6,301.7 624.2,296.7 622.4,294.0 C620.6,291.3 616.4,288.2 615.2,287.1" fill="none" stroke="#b3bdd4" stroke-width="0.6" stroke-linejoin="round" stroke-linecap="round" /><path d="M641.8,333.1 C640.3,333.8 635.2,335.4 632.8,337.5 C630.4,339.6 628.4,344.6 627.5,346.0" fill="none" stroke="#b3bdd4" stroke-width="0.6" stroke-linejoin="round" stroke-linecap="round" /><path d="M669.3,398.3 C667.7,398.3 662.6,397.8 659.3,398.3 C656.0,398.8 651.4,400.7 649.8,401.2" fill="none" stroke="#b3bdd4" stroke-width="0.6" stroke-linejoin="round" stroke-linecap="round" /><path d="M654.5,343.2 C656.2,343.2 661.3,342.5 664.5,343.1 C667.7,343.7 672.3,346.1 673.9,346.7" fill="none" stroke="#b3bdd4" stroke-width="0.6" stroke-linejoin="round" stroke-linecap="round" /><path d="M667.4,321.7 C669.1,321.5 674.3,321.5 677.4,320.5 C680.5,319.5 684.6,316.5 686.1,315.7" fill="none" stroke="#b3bdd4" stroke-width="0.6" stroke-linejoin="round" stroke-linecap="round" /><path d="M605.9,296.4 C604.7,295.2 601.3,291.5 598.9,289.2 C596.5,286.9 592.8,283.4 591.6,282.3" fill="none" stroke="#b3bdd4" stroke-width="0.6" stroke-linejoin="round" stroke-linecap="round" /><path d="M666.3,403.7 C667.8,404.6 672.0,407.2 675.0,408.7 C678.0,410.2 682.7,412.0 684.2,412.6" fill="none" stroke="#b3bdd4" stroke-width="0.6" stroke-linejoin="round" stroke-linecap="round" /><path d="M608.4,409.9 C608.2,411.6 607.9,416.6 607.2,419.8 C606.5,423.0 604.8,427.8 604.3,429.4" fill="none" stroke="#b3bdd4" stroke-width="0.6" stroke-linejoin="round" stroke-linecap="round" /><path d="M666.9,373.7 C665.7,374.8 661.4,377.8 659.5,380.4 C657.6,383.0 656.1,388.0 655.4,389.5" fill="none" stroke="#b3bdd4" stroke-width="0.6" stroke-linejoin="round" stroke-linecap="round" /><path d="M667.6,414.0 C668.7,415.2 671.8,419.3 674.3,421.4 C676.8,423.5 681.4,425.7 682.8,426.6" fill="none" stroke="#b3bdd4" stroke-width="0.6" stroke-linejoin="round" stroke-linecap="round" /><path d="M624.6,402.8 C626.3,402.5 631.6,402.3 634.5,400.9 C637.4,399.5 640.6,395.3 641.8,394.2" fill="none" stroke="#b3bdd4" stroke-width="0.6" stroke-linejoin="round" stroke-linecap="round" /><path d="M655.0,378.7 C654.9,377.0 655.5,371.7 654.4,368.7 C653.3,365.7 649.7,361.9 648.7,360.5" fill="none" stroke="#b3bdd4" stroke-width="0.6" stroke-linejoin="round" stroke-linecap="round" /><path d="M414.6,404.0 C416.6,403.6 422.6,403.1 426.4,402.0 C430.2,400.9 435.6,398.0 437.5,397.2" fill="none" stroke="#b3bdd4" stroke-width="0.6" stroke-linejoin="round" stroke-linecap="round" /><path d="M490.5,404.1 C492.3,405.0 497.5,408.1 501.3,409.3 C505.1,410.5 511.2,410.9 513.2,411.2" fill="none" stroke="#b3bdd4" stroke-width="0.6" stroke-linejoin="round" stroke-linecap="round" /><path d="M411.1,391.7 C412.6,393.0 416.5,397.8 419.9,399.8 C423.3,401.8 429.4,402.9 431.3,403.5" fill="none" stroke="#b3bdd4" stroke-width="0.6" stroke-linejoin="round" stroke-linecap="round" /><path d="M505.2,370.6 C504.1,368.9 501.6,363.0 498.7,360.5 C495.8,358.0 489.7,356.2 487.9,355.3" fill="none" stroke="#b3bdd4" stroke-width="0.6" stroke-linejoin="round" stroke-linecap="round" /><path d="M547.7,379.9 C549.7,380.0 555.9,379.2 559.7,380.2 C563.5,381.2 568.5,384.9 570.3,385.9" fill="none" stroke="#b3bdd4" stroke-width="0.6" stroke-linejoin="round" stroke-linecap="round" /><path d="M413.8,390.1 C414.6,391.9 418.0,397.1 418.9,400.9 C419.8,404.7 419.3,410.9 419.4,412.9" fill="none" stroke="#b3bdd4" stroke-width="0.6" stroke-linejoin="round" stroke-linecap="round" /><path d="M496.8,390.4 C495.2,391.5 490.2,394.9 487.0,397.3 C483.8,399.7 479.1,403.3 477.5,404.5" fill="none" stroke="#b3bdd4" stroke-width="0.6" stroke-linejoin="round" stroke-linecap="round" /><path d="M496.8,376.4 C498.1,377.9 502.4,382.2 504.6,385.5 C506.8,388.8 509.0,394.5 509.9,396.3" fill="none" stroke="#b3bdd4" stroke-width="0.6" stroke-linejoin="round" stroke-linecap="round" /><path d="M484.1,376.5 C485.0,374.7 487.9,369.5 489.6,365.9 C491.3,362.3 493.3,356.6 494.0,354.7" fill="none" stroke="#b3bdd4" stroke-width="0.6" stroke-linejoin="round" stroke-linecap="round" /><path d="M416.5,382.2 C417.2,380.3 420.1,374.9 420.7,371.0 C421.3,367.1 420.4,361.0 420.3,359.0" fill="none" stroke="#b3bdd4" stroke-width="0.6" stroke-linejoin="round" stroke-linecap="round" /><path d="M473.5,384.3 C474.4,382.6 476.5,376.5 479.2,373.8 C481.9,371.1 488.0,369.1 489.8,368.1" fill="none" stroke="#b3bdd4" stroke-width="0.6" stroke-linejoin="round" stroke-linecap="round" /><path d="M399.7,410.3 C398.2,409.0 393.7,405.0 390.6,402.4 C387.5,399.8 382.9,396.1 381.3,394.9" fill="none" stroke="#b3bdd4" stroke-width="0.6" stroke-linejoin="round" stroke-linecap="round" /><path d="M438.7,381.6 C439.6,383.4 443.4,388.5 444.1,392.3 C444.8,396.1 442.9,402.2 442.6,404.2" fill="none" stroke="#b3bdd4" stroke-width="0.6" stroke-linejoin="round" stroke-linecap="round" /><path d="M559.7,411.6 C561.5,412.3 567.7,413.7 570.9,415.9 C574.1,418.1 577.6,423.3 579.0,424.8" fill="none" stroke="#b3bdd4" stroke-width="0.6" stroke-linejoin="round" stroke-linecap="round" /><path d="M399.8,402.7 C398.3,404.0 392.8,407.3 390.8,410.6 C388.8,413.9 388.1,420.3 387.6,422.2" fill="none" stroke="#b3bdd4" stroke-width="0.6" stroke-linejoin="round" stroke-linecap="round" /><path d="M527.2,385.3 C529.1,385.9 535.2,386.9 538.7,388.7 C542.2,390.5 546.5,394.9 548.0,396.2" fill="none" stroke="#b3bdd4" stroke-width="0.6" stroke-linejoin="round" stroke-linecap="round" /><path d="M479.5,378.4 C477.5,378.2 471.5,377.0 467.6,377.3 C463.7,377.6 457.8,379.8 455.9,380.3" fill="none" stroke="#b3bdd4" stroke-width="0.6" stroke-linejoin="round" stroke-linecap="round" /><path d="M487.1,376.2 C487.4,378.2 488.6,384.1 488.5,388.1 C488.4,392.1 487.1,398.0 486.8,400.0" fill="none" stroke="#b3bdd4" stroke-width="0.6" stroke-linejoin="round" stroke-linecap="round" /><path d="M423.4,373.6 C425.0,374.8 429.7,378.6 432.8,381.1 C435.9,383.6 440.6,387.4 442.2,388.6" fill="none" stroke="#b3bdd4" stroke-width="0.6" stroke-linejoin="round" stroke-linecap="round" /><path d="M436.6,379.3 C435.4,377.6 431.2,373.1 429.6,369.5 C428.0,365.9 427.3,359.8 426.8,357.8" fill="none" stroke="#b3bdd4" stroke-width="0.6" stroke-linejoin="round" stroke-linecap="round" /><path d="M489.1,379.1 C490.6,380.4 495.1,384.4 498.3,386.8 C501.5,389.2 506.7,392.3 508.4,393.4" fill="none" stroke="#b3bdd4" stroke-width="0.6" stroke-linejoin="round" stroke-linecap="round" /><path d="M512.7,372.5 C513.1,370.5 513.4,364.3 514.9,360.7 C516.4,357.1 520.5,352.4 521.6,350.7" fill="none" stroke="#b3bdd4" stroke-width="0.6" stroke-linejoin="round" stroke-linecap="round" /><path d="M537.0,392.2 C538.6,393.3 543.5,396.7 546.9,398.9 C550.3,401.1 555.4,404.1 557.1,405.2" fill="none" stroke="#b3bdd4" stroke-width="0.6" stroke-linejoin="round" stroke-linecap="round" /><path d="M538.2,382.0 C538.3,384.0 538.0,390.0 538.3,394.0 C538.6,398.0 539.9,403.8 540.2,405.8" fill="none" stroke="#b3bdd4" stroke-width="0.6" stroke-linejoin="round" stroke-linecap="round" /><path d="M417.8,386.7 C415.8,386.7 409.8,386.8 405.8,386.7 C401.8,386.6 395.8,386.4 393.8,386.4" fill="none" stroke="#b3bdd4" stroke-width="0.6" stroke-linejoin="round" stroke-linecap="round" /><path d="M465.8,393.2 C466.8,394.9 470.7,399.7 472.1,403.4 C473.5,407.1 473.9,413.2 474.2,415.2" fill="none" stroke="#b3bdd4" stroke-width="0.6" stroke-linejoin="round" stroke-linecap="round" /><path d="M537.1,384.4 C536.4,382.6 533.5,377.1 532.6,373.3 C531.7,369.5 531.8,363.4 531.6,361.4" fill="none" stroke="#b3bdd4" stroke-width="0.6" stroke-linejoin="round" stroke-linecap="round" /><path d="M400.4,409.3 C402.3,408.7 408.1,406.9 411.9,405.8 C415.7,404.7 421.5,403.1 423.4,402.5" fill="none" stroke="#b3bdd4" stroke-width="0.6" stroke-linejoin="round" stroke-linecap="round" /><path d="M480.2,394.2 C481.7,395.4 486.0,399.8 489.4,401.8 C492.8,403.8 498.8,405.3 500.7,406.0" fill="none" stroke="#b3bdd4" stroke-width="0.6" stroke-linejoin="round" stroke-linecap="round" /><path d="M421.0,374.6 C420.3,376.5 416.9,381.9 416.5,385.7 C416.1,389.5 418.3,395.6 418.7,397.6" fill="none" stroke="#b3bdd4" stroke-width="0.6" stroke-linejoin="round" stroke-linecap="round" /><polygon points="968,203.5 968,203.5 948,203.5 930,210.5 900,216 865,222 833.8,229 802.5,236.9 771.3,247.8 740,255.6 722,257 716,250 708,247 700,249 692,255 682,266 675,267 670.3,263.5 665.4,261.7 658,258.6 654.2,264.8 648,269.7 633.2,279.7 619.5,285.8 615.8,289.6 627,292 633.2,297 648,298.2 661.7,305.7 670.3,309.4 673.44,315.66 673.44,335.54 669.46,358.73 664.49,375.3 659.52,395.18 656.87,417.05 968,416.8" fill="#8bd6eb" /><polygon points="653,238 668,238 665,250 658,259 652,250" fill="#8bd6eb" /><path d="M672.0,203.0 C671.3,205.8 669.2,214.8 668.0,220.0 C666.8,225.2 665.5,231.7 665.0,234.0" fill="none" stroke="#8bd6eb" stroke-width="3" stroke-linejoin="round" stroke-linecap="round" /><path d="M683.0,203.0 C681.8,205.0 678.5,209.5 676.0,215.0 C673.5,220.5 669.3,232.5 668.0,236.0" fill="none" stroke="#8bd6eb" stroke-width="1.8" stroke-linejoin="round" stroke-linecap="round" /><path d="M609.8,288.5 C615.9,287.4 636.3,283.5 646.3,281.9 C656.2,280.2 662.3,277.6 669.5,278.6 C676.6,279.5 686.0,286.3 689.3,287.8" fill="none" stroke="#5fa9c4" stroke-width="0.5" stroke-linejoin="round" stroke-linecap="round" opacity="0.6"/><path d="M665.5,291.8 C665.8,293.6 666.7,298.4 667.5,302.4 C668.3,306.4 669.7,313.5 670.1,315.7" fill="none" stroke="#dcefe4" stroke-width="2" stroke-linejoin="round" stroke-linecap="round" /><path d="M752.5,264.5 C760.8,262.5 786.4,256.3 802.5,252.5 C818.6,248.7 833.1,246.5 849.4,241.6 C865.6,236.7 883.2,228.9 900.0,222.8 C916.8,216.7 940.3,208.2 950.0,205.0 C959.7,201.8 956.7,203.8 958.0,203.5" fill="none" stroke="#c8ece0" stroke-width="0.8" stroke-linejoin="round" stroke-linecap="round" /><path d="M666.0,266.5 C668.7,266.8 676.3,268.8 682.0,268.5 C687.7,268.2 692.0,266.1 700.0,265.0 C708.0,263.9 721.2,262.1 730.0,262.0 C738.8,261.9 748.8,264.1 752.5,264.5" fill="none" stroke="#edf2f1" stroke-width="2.2" stroke-linejoin="round" stroke-linecap="round" /><path d="M611.5,286.5 C610.7,285.3 607.9,282.1 606.5,279.2 C605.1,276.3 603.7,270.9 603.2,269.3" fill="none" stroke="#a6dcea" stroke-width="1.4" stroke-linejoin="round" stroke-linecap="round" /><path d="M480.6,358.7 C482.8,358.2 489.4,355.4 493.8,355.4 C498.2,355.4 504.9,358.2 507.1,358.7" fill="none" stroke="#a6dcea" stroke-width="1.2" stroke-linejoin="round" stroke-linecap="round" /><path d="M312,262.2 q1.5,0.5 3,-0.2 q1.5,0.7 3,0.2 v2.6 q0,2.8 -3,3.8 q-3,-1 -3,-3.8z" fill="#4f7fd6" stroke="#fff" stroke-width="0.6"/><rect x="312.4" y="262.5" width="5.2" height="0.9" fill="#e0625c"/><rect x="313.4" y="264.4" width="3.2" height="1.6" fill="#a9c3ef"/><path d="M413,254.2 q1.5,0.5 3,-0.2 q1.5,0.7 3,0.2 v2.6 q0,2.8 -3,3.8 q-3,-1 -3,-3.8z" fill="#4f7fd6" stroke="#fff" stroke-width="0.6"/><rect x="413.4" y="254.5" width="5.2" height="0.9" fill="#e0625c"/><rect x="414.4" y="256.4" width="3.2" height="1.6" fill="#a9c3ef"/><path d="M383,288.2 q1.5,0.5 3,-0.2 q1.5,0.7 3,0.2 v2.6 q0,2.8 -3,3.8 q-3,-1 -3,-3.8z" fill="#4f7fd6" stroke="#fff" stroke-width="0.6"/><rect x="383.4" y="288.5" width="5.2" height="0.9" fill="#e0625c"/><rect x="384.4" y="290.4" width="3.2" height="1.6" fill="#a9c3ef"/><path d="M558.3,225.89999999999998 q1.5,0.5 3,-0.2 q1.5,0.7 3,0.2 v2.6 q0,2.8 -3,3.8 q-3,-1 -3,-3.8z" fill="#4f7fd6" stroke="#fff" stroke-width="0.6"/><rect x="558.6999999999999" y="226.2" width="5.2" height="0.9" fill="#e0625c"/><rect x="559.6999999999999" y="228.1" width="3.2" height="1.6" fill="#a9c3ef"/><path d="M568.2,244.2 q1.5,0.5 3,-0.2 q1.5,0.7 3,0.2 v2.6 q0,2.8 -3,3.8 q-3,-1 -3,-3.8z" fill="#4f7fd6" stroke="#fff" stroke-width="0.6"/><rect x="568.6" y="244.5" width="5.2" height="0.9" fill="#e0625c"/><rect x="569.6" y="246.4" width="3.2" height="1.6" fill="#a9c3ef"/><path d="M563.3,270.7 q1.5,0.5 3,-0.2 q1.5,0.7 3,0.2 v2.6 q0,2.8 -3,3.8 q-3,-1 -3,-3.8z" fill="#4f7fd6" stroke="#fff" stroke-width="0.6"/><rect x="563.6999999999999" y="271.0" width="5.2" height="0.9" fill="#e0625c"/><rect x="564.6999999999999" y="272.9" width="3.2" height="1.6" fill="#a9c3ef"/><path d="M617.2,208.5 q1.5,0.5 3,-0.2 q1.5,0.7 3,0.2 v2.6 q0,2.8 -3,3.8 q-3,-1 -3,-3.8z" fill="#4f7fd6" stroke="#fff" stroke-width="0.6"/><rect x="617.6" y="208.8" width="5.2" height="0.9" fill="#e0625c"/><rect x="618.6" y="210.70000000000002" width="3.2" height="1.6" fill="#a9c3ef"/><path d="M464.5,242.5 q1.5,0.5 3,-0.2 q1.5,0.7 3,0.2 v2.6 q0,2.8 -3,3.8 q-3,-1 -3,-3.8z" fill="#4f7fd6" stroke="#fff" stroke-width="0.6"/><rect x="464.9" y="242.8" width="5.2" height="0.9" fill="#e0625c"/><rect x="465.9" y="244.70000000000002" width="3.2" height="1.6" fill="#a9c3ef"/><path d="M579,303.2 q1.5,0.5 3,-0.2 q1.5,0.7 3,0.2 v2.6 q0,2.8 -3,3.8 q-3,-1 -3,-3.8z" fill="#4f7fd6" stroke="#fff" stroke-width="0.6"/><rect x="579.4" y="303.5" width="5.2" height="0.9" fill="#e0625c"/><rect x="580.4" y="305.4" width="3.2" height="1.6" fill="#a9c3ef"/><path d="M650,206.0 q1.5,0.5 3,-0.2 q1.5,0.7 3,0.2 v2.6 q0,2.8 -3,3.8 q-3,-1 -3,-3.8z" fill="#4f7fd6" stroke="#fff" stroke-width="0.6"/><rect x="650.4" y="206.3" width="5.2" height="0.9" fill="#e0625c"/><rect x="651.4" y="208.20000000000002" width="3.2" height="1.6" fill="#a9c3ef"/><path d="M707.4,219.29999999999998 q1.5,0.5 3,-0.2 q1.5,0.7 3,0.2 v2.6 q0,2.8 -3,3.8 q-3,-1 -3,-3.8z" fill="#4f7fd6" stroke="#fff" stroke-width="0.6"/><rect x="707.8" y="219.6" width="5.2" height="0.9" fill="#e0625c"/><rect x="708.8" y="221.5" width="3.2" height="1.6" fill="#a9c3ef"/><path d="M409.9,359.5 q1.5,0.5 3,-0.2 q1.5,0.7 3,0.2 v2.6 q0,2.8 -3,3.8 q-3,-1 -3,-3.8z" fill="#4f7fd6" stroke="#fff" stroke-width="0.6"/><rect x="410.29999999999995" y="359.8" width="5.2" height="0.9" fill="#e0625c"/><rect x="411.29999999999995" y="361.7" width="3.2" height="1.6" fill="#a9c3ef"/><path d="M451.4,367.8 q1.5,0.5 3,-0.2 q1.5,0.7 3,0.2 v2.6 q0,2.8 -3,3.8 q-3,-1 -3,-3.8z" fill="#4f7fd6" stroke="#fff" stroke-width="0.6"/><rect x="451.79999999999995" y="368.1" width="5.2" height="0.9" fill="#e0625c"/><rect x="452.79999999999995" y="370.0" width="3.2" height="1.6" fill="#a9c3ef"/><path d="M415.7,391.0 q1.5,0.5 3,-0.2 q1.5,0.7 3,0.2 v2.6 q0,2.8 -3,3.8 q-3,-1 -3,-3.8z" fill="#4f7fd6" stroke="#fff" stroke-width="0.6"/><rect x="416.09999999999997" y="391.3" width="5.2" height="0.9" fill="#e0625c"/><rect x="417.09999999999997" y="393.2" width="3.2" height="1.6" fill="#a9c3ef"/><path d="M513.5,335.4 q1.5,0.5 3,-0.2 q1.5,0.7 3,0.2 v2.6 q0,2.8 -3,3.8 q-3,-1 -3,-3.8z" fill="#4f7fd6" stroke="#fff" stroke-width="0.6"/><rect x="513.9" y="335.7" width="5.2" height="0.9" fill="#e0625c"/><rect x="514.9" y="337.59999999999997" width="3.2" height="1.6" fill="#a9c3ef"/><path d="M551.6,357.8 q1.5,0.5 3,-0.2 q1.5,0.7 3,0.2 v2.6 q0,2.8 -3,3.8 q-3,-1 -3,-3.8z" fill="#4f7fd6" stroke="#fff" stroke-width="0.6"/><rect x="552.0" y="358.1" width="5.2" height="0.9" fill="#e0625c"/><rect x="553.0" y="360.0" width="3.2" height="1.6" fill="#a9c3ef"/><path d="M584,369.5 q1.5,0.5 3,-0.2 q1.5,0.7 3,0.2 v2.6 q0,2.8 -3,3.8 q-3,-1 -3,-3.8z" fill="#4f7fd6" stroke="#fff" stroke-width="0.6"/><rect x="584.4" y="369.8" width="5.2" height="0.9" fill="#e0625c"/><rect x="585.4" y="371.7" width="3.2" height="1.6" fill="#a9c3ef"/><path d="M467.8,400.2 q1.5,0.5 3,-0.2 q1.5,0.7 3,0.2 v2.6 q0,2.8 -3,3.8 q-3,-1 -3,-3.8z" fill="#4f7fd6" stroke="#fff" stroke-width="0.6"/><rect x="468.2" y="400.5" width="5.2" height="0.9" fill="#e0625c"/><rect x="469.2" y="402.4" width="3.2" height="1.6" fill="#a9c3ef"/><path d="M801.6,203.5 q1.5,0.5 3,-0.2 q1.5,0.7 3,0.2 v2.6 q0,2.8 -3,3.8 q-3,-1 -3,-3.8z" fill="#4f7fd6" stroke="#fff" stroke-width="0.6"/><rect x="802.0" y="203.8" width="5.2" height="0.9" fill="#e0625c"/><rect x="803.0" y="205.70000000000002" width="3.2" height="1.6" fill="#a9c3ef"/><path d="M492,412.7 q1.5,0.5 3,-0.2 q1.5,0.7 3,0.2 v2.6 q0,2.8 -3,3.8 q-3,-1 -3,-3.8z" fill="#4f7fd6" stroke="#fff" stroke-width="0.6"/><rect x="492.4" y="413.0" width="5.2" height="0.9" fill="#e0625c"/><rect x="493.4" y="414.9" width="3.2" height="1.6" fill="#a9c3ef"/><path d="M584,366.2 q1.5,0.5 3,-0.2 q1.5,0.7 3,0.2 v2.6 q0,2.8 -3,3.8 q-3,-1 -3,-3.8z" fill="#4f7fd6" stroke="#fff" stroke-width="0.6"/><rect x="584.4" y="366.5" width="5.2" height="0.9" fill="#e0625c"/><rect x="585.4" y="368.4" width="3.2" height="1.6" fill="#a9c3ef"/><rect x="391.75" y="243.4" width="6.5" height="5.2" rx="1.8" fill="#fbfbfb" stroke="#a9a9a9" stroke-width="0.5"/><text x="395" y="247.3" font-size="3.6" fill="#666" text-anchor="middle">22</text><rect x="456.0" y="225.4" width="6" height="5.2" rx="1.8" fill="#fbfbfb" stroke="#a9a9a9" stroke-width="0.5"/><text x="459" y="229.3" font-size="3.6" fill="#666" text-anchor="middle">57</text><rect x="442.25" y="297.4" width="7.5" height="5.2" rx="1.8" fill="#fbfbfb" stroke="#a9a9a9" stroke-width="0.5"/><text x="446" y="301.3" font-size="3.6" fill="#666" text-anchor="middle">611</text><rect x="530.25" y="223.4" width="7.5" height="5.2" rx="1.8" fill="#fbfbfb" stroke="#a9a9a9" stroke-width="0.5"/><text x="534" y="227.3" font-size="3.6" fill="#666" text-anchor="middle">206</text><rect x="568.0" y="257.4" width="6" height="5.2" rx="1.8" fill="#fbfbfb" stroke="#a9a9a9" stroke-width="0.5"/><text x="571" y="261.3" font-size="3.6" fill="#666" text-anchor="middle">22</text><rect x="508.25" y="272.4" width="7.5" height="5.2" rx="1.8" fill="#fbfbfb" stroke="#a9a9a9" stroke-width="0.5"/><text x="512" y="276.3" font-size="3.6" fill="#666" text-anchor="middle">202</text><rect x="393.0" y="353.4" width="6" height="5.2" rx="1.8" fill="#fbfbfb" stroke="#a9a9a9" stroke-width="0.5"/><text x="396" y="357.3" font-size="3.6" fill="#666" text-anchor="middle">73</text><rect x="370.25" y="364.4" width="7.5" height="5.2" rx="1.8" fill="#fbfbfb" stroke="#a9a9a9" stroke-width="0.5"/><text x="374" y="368.3" font-size="3.6" fill="#666" text-anchor="middle">422</text><rect x="336.25" y="373.4" width="7.5" height="5.2" rx="1.8" fill="#fbfbfb" stroke="#a9a9a9" stroke-width="0.5"/><text x="340" y="377.3" font-size="3.6" fill="#666" text-anchor="middle">100</text><rect x="307.25" y="390.4" width="7.5" height="5.2" rx="1.8" fill="#fbfbfb" stroke="#a9a9a9" stroke-width="0.5"/><text x="311" y="394.3" font-size="3.6" fill="#666" text-anchor="middle">322</text><rect x="373.25" y="395.4" width="7.5" height="5.2" rx="1.8" fill="#fbfbfb" stroke="#a9a9a9" stroke-width="0.5"/><text x="377" y="399.3" font-size="3.6" fill="#666" text-anchor="middle">202</text><rect x="486.25" y="308.4" width="7.5" height="5.2" rx="1.8" fill="#fbfbfb" stroke="#a9a9a9" stroke-width="0.5"/><text x="490" y="312.3" font-size="3.6" fill="#666" text-anchor="middle">206</text><rect x="611.0" y="347.4" width="6" height="5.2" rx="1.8" fill="#fbfbfb" stroke="#a9a9a9" stroke-width="0.5"/><text x="614" y="351.3" font-size="3.6" fill="#666" text-anchor="middle">33</text><rect x="630.0" y="340.4" width="6" height="5.2" rx="1.8" fill="#fbfbfb" stroke="#a9a9a9" stroke-width="0.5"/><text x="633" y="344.3" font-size="3.6" fill="#666" text-anchor="middle">18</text><rect x="645.0" y="387.4" width="6" height="5.2" rx="1.8" fill="#fbfbfb" stroke="#a9a9a9" stroke-width="0.5"/><text x="648" y="391.3" font-size="3.6" fill="#666" text-anchor="middle">70</text><rect x="636.0" y="297.4" width="6" height="5.2" rx="1.8" fill="#fbfbfb" stroke="#a9a9a9" stroke-width="0.5"/><text x="639" y="301.3" font-size="3.6" fill="#666" text-anchor="middle">36</text><rect x="879.0" y="205.4" width="6" height="5.2" rx="1.8" fill="#fbfbfb" stroke="#a9a9a9" stroke-width="0.5"/><text x="882" y="209.3" font-size="3.6" fill="#666" text-anchor="middle">27</text><rect x="767.75" y="207.4" width="6.5" height="5.2" rx="1.8" fill="#fbfbfb" stroke="#a9a9a9" stroke-width="0.5"/><text x="771" y="211.3" font-size="3.6" fill="#666" text-anchor="middle">135</text><text x="341" y="207.5" font-size="6.42" fill="#50555a" font-weight="400" stroke="#fff" stroke-width="1.3" paint-order="stroke" stroke-opacity="0.75">Palmerton</text><text x="403" y="226" font-size="6.42" fill="#50555a" font-weight="400" stroke="#fff" stroke-width="1.3" paint-order="stroke" stroke-opacity="0.75">Nazareth</text><text x="359" y="239.6" font-size="6.42" fill="#50555a" font-weight="400" stroke="#fff" stroke-width="1.3" paint-order="stroke" stroke-opacity="0.75">Northampton</text><text x="421" y="239" font-size="6.42" fill="#50555a" font-weight="400" stroke="#fff" stroke-width="1.3" paint-order="stroke" stroke-opacity="0.75">Easton</text><text x="364.7" y="261.8" font-size="7.0" fill="#3c4043" font-weight="700" stroke="#fff" stroke-width="1.3" paint-order="stroke" stroke-opacity="0.75">Allentown</text><text x="364.7" y="277" font-size="6.42" fill="#50555a" font-weight="400" stroke="#fff" stroke-width="1.3" paint-order="stroke" stroke-opacity="0.75">Emmaus</text><text x="309.6" y="282.7" font-size="6.42" fill="#50555a" font-weight="400" stroke="#fff" stroke-width="1.3" paint-order="stroke" stroke-opacity="0.75">Kutztown</text><text x="283" y="328.7" font-size="6.42" fill="#50555a" font-weight="400" stroke="#fff" stroke-width="1.3" paint-order="stroke" stroke-opacity="0.75">Reading</text><text x="333.2" y="352" font-size="6.42" fill="#50555a" font-weight="400" stroke="#fff" stroke-width="1.3" paint-order="stroke" stroke-opacity="0.75">Pottstown</text><text x="406.2" y="353" font-size="6.42" fill="#50555a" font-weight="400" stroke="#fff" stroke-width="1.3" paint-order="stroke" stroke-opacity="0.75">Lansdale</text><text x="432.4" y="335.8" font-size="6.42" fill="#50555a" font-weight="400" stroke="#fff" stroke-width="1.3" paint-order="stroke" stroke-opacity="0.75">Doylestown</text><text x="389.6" y="385.2" font-size="6.42" fill="#50555a" font-weight="400" stroke="#fff" stroke-width="1.3" paint-order="stroke" stroke-opacity="0.75">King of</text><text x="389.6" y="392" font-size="6.42" fill="#50555a" font-weight="400" stroke="#fff" stroke-width="1.3" paint-order="stroke" stroke-opacity="0.75">Prussia</text><text x="344.8" y="406.3" font-size="6.42" fill="#50555a" font-weight="400" stroke="#fff" stroke-width="1.3" paint-order="stroke" stroke-opacity="0.75">Exton</text><text x="559.6" y="212.3" font-size="6.42" fill="#50555a" font-weight="400" stroke="#fff" stroke-width="1.3" paint-order="stroke" stroke-opacity="0.75">Morristown</text><text x="529.7" y="263.3" font-size="6.42" fill="#50555a" font-weight="400" stroke="#fff" stroke-width="1.3" paint-order="stroke" stroke-opacity="0.75">Bridgewater</text><text x="614.4" y="245" font-size="6.42" fill="#50555a" font-weight="400" stroke="#fff" stroke-width="1.3" paint-order="stroke" stroke-opacity="0.75">Elizabeth</text><text x="579.5" y="282.7" font-size="6.42" fill="#50555a" font-weight="400" stroke="#fff" stroke-width="1.3" paint-order="stroke" stroke-opacity="0.75">Edison</text><text x="527.3" y="325.2" font-size="6.42" fill="#50555a" font-weight="400" stroke="#fff" stroke-width="1.3" paint-order="stroke" stroke-opacity="0.75">Princeton</text><text x="569.6" y="329.3" font-size="6.42" fill="#50555a" font-weight="400" stroke="#fff" stroke-width="1.3" paint-order="stroke" stroke-opacity="0.75">Monroe</text><text x="567" y="335.9" font-size="6.42" fill="#50555a" font-weight="400" stroke="#fff" stroke-width="1.3" paint-order="stroke" stroke-opacity="0.75">Township</text><text x="506.5" y="359.2" font-size="7.0" fill="#3c4043" font-weight="700" stroke="#fff" stroke-width="1.3" paint-order="stroke" stroke-opacity="0.75">Trenton</text><text x="494" y="375.2" font-size="6.42" fill="#50555a" font-weight="400" stroke="#fff" stroke-width="1.3" paint-order="stroke" stroke-opacity="0.75">Levittown</text><text x="605.3" y="375.6" font-size="6.42" fill="#50555a" font-weight="400" stroke="#fff" stroke-width="1.3" paint-order="stroke" stroke-opacity="0.75">Jackson</text><text x="603" y="381.9" font-size="6.42" fill="#50555a" font-weight="400" stroke="#fff" stroke-width="1.3" paint-order="stroke" stroke-opacity="0.75">Township</text><text x="612.7" y="392.7" font-size="6.42" fill="#50555a" font-weight="400" stroke="#fff" stroke-width="1.3" paint-order="stroke" stroke-opacity="0.75">Lakewood</text><text x="644.8" y="234.2" font-size="10.2" fill="#3c4043" font-weight="700" stroke="#fff" stroke-width="1.3" paint-order="stroke" stroke-opacity="0.75">New York</text><text x="723.7" y="229.2" font-size="6.42" fill="#50555a" font-weight="400" stroke="#fff" stroke-width="1.3" paint-order="stroke" stroke-opacity="0.75">Garden City</text><text x="753.6" y="240.9" font-size="6.42" fill="#50555a" font-weight="400" stroke="#fff" stroke-width="1.3" paint-order="stroke" stroke-opacity="0.75">Massapequa</text><text x="802" y="229.2" font-size="6.42" fill="#50555a" font-weight="400" stroke="#fff" stroke-width="1.3" paint-order="stroke" stroke-opacity="0.75">Bay Shore</text><text x="596" y="311.2" font-size="6.42" fill="#50555a" font-weight="400" stroke="#fff" stroke-width="1.3" paint-order="stroke" stroke-opacity="0.75">Old Bridge</text><text x="632.6" y="310.9" font-size="6.42" fill="#50555a" font-weight="400" stroke="#fff" stroke-width="1.3" paint-order="stroke" stroke-opacity="0.75">Middletown</text><text x="635" y="317.6" font-size="6.42" fill="#50555a" font-weight="400" stroke="#fff" stroke-width="1.3" paint-order="stroke" stroke-opacity="0.75">Township</text><text x="655" y="334.8" font-size="6.42" fill="#50555a" font-weight="400" stroke="#fff" stroke-width="1.3" paint-order="stroke" stroke-opacity="0.75">Long Branch</text><text x="649.8" y="358.3" font-size="6.42" fill="#50555a" font-weight="400" stroke="#fff" stroke-width="1.3" paint-order="stroke" stroke-opacity="0.75">Asbury Park</text><text x="636" y="374.6" font-size="6.42" fill="#50555a" font-weight="400" stroke="#fff" stroke-width="1.3" paint-order="stroke" stroke-opacity="0.75">Township</text><text x="821" y="213.3" font-size="6.0" fill="#5f6368" font-weight="400" font-style="italic" stroke="#fff" stroke-width="1.2" paint-order="stroke" stroke-opacity="0.7">Long Island</text><text x="806" y="241.5" font-size="5.4" fill="#3a8db3" font-weight="400" font-style="italic" transform="rotate(-10 806 241.5)">Great South Bay</text><text x="779" y="396" font-size="6.0" fill="#3a8db3" font-weight="400" transform="rotate(-41 779 396)">New York/New Jersey Bight</text><g><circle cx="637" cy="234" r="10.5" fill="#f9d04a" opacity="0.55" filter="url(#bl2)"/><line x1="637" y1="234" x2="648.3" y2="236.3" stroke="#f7c840" stroke-width="1.2" opacity="0.3"/><line x1="637" y1="234" x2="645.6" y2="241.6" stroke="#f7c840" stroke-width="1.2" opacity="0.3"/><line x1="637" y1="234" x2="640.7" y2="244.9" stroke="#f7c840" stroke-width="1.2" opacity="0.3"/><line x1="637" y1="234" x2="634.7" y2="245.3" stroke="#f7c840" stroke-width="1.2" opacity="0.3"/><line x1="637" y1="234" x2="629.4" y2="242.6" stroke="#f7c840" stroke-width="1.2" opacity="0.3"/><line x1="637" y1="234" x2="626.1" y2="237.7" stroke="#f7c840" stroke-width="1.2" opacity="0.3"/><line x1="637" y1="234" x2="625.7" y2="231.7" stroke="#f7c840" stroke-width="1.2" opacity="0.3"/><line x1="637" y1="234" x2="628.4" y2="226.4" stroke="#f7c840" stroke-width="1.2" opacity="0.3"/><line x1="637" y1="234" x2="633.3" y2="223.1" stroke="#f7c840" stroke-width="1.2" opacity="0.3"/><line x1="637" y1="234" x2="639.3" y2="222.7" stroke="#f7c840" stroke-width="1.2" opacity="0.3"/><line x1="637" y1="234" x2="644.6" y2="225.4" stroke="#f7c840" stroke-width="1.2" opacity="0.3"/><line x1="637" y1="234" x2="647.9" y2="230.3" stroke="#f7c840" stroke-width="1.2" opacity="0.3"/><circle cx="637" cy="234" r="7.3" fill="#f6bd17"/><text x="637" y="236.3" font-size="6.4" font-weight="700" fill="#2e2300" text-anchor="middle">10</text></g><g><circle cx="615.9" cy="270.9" r="10.5" fill="#f9d04a" opacity="0.55" filter="url(#bl2)"/><line x1="615.9" y1="270.9" x2="627.2" y2="273.2" stroke="#f7c840" stroke-width="1.2" opacity="0.3"/><line x1="615.9" y1="270.9" x2="624.5" y2="278.5" stroke="#f7c840" stroke-width="1.2" opacity="0.3"/><line x1="615.9" y1="270.9" x2="619.6" y2="281.8" stroke="#f7c840" stroke-width="1.2" opacity="0.3"/><line x1="615.9" y1="270.9" x2="613.6" y2="282.2" stroke="#f7c840" stroke-width="1.2" opacity="0.3"/><line x1="615.9" y1="270.9" x2="608.3" y2="279.5" stroke="#f7c840" stroke-width="1.2" opacity="0.3"/><line x1="615.9" y1="270.9" x2="605.0" y2="274.6" stroke="#f7c840" stroke-width="1.2" opacity="0.3"/><line x1="615.9" y1="270.9" x2="604.6" y2="268.6" stroke="#f7c840" stroke-width="1.2" opacity="0.3"/><line x1="615.9" y1="270.9" x2="607.3" y2="263.3" stroke="#f7c840" stroke-width="1.2" opacity="0.3"/><line x1="615.9" y1="270.9" x2="612.2" y2="260.0" stroke="#f7c840" stroke-width="1.2" opacity="0.3"/><line x1="615.9" y1="270.9" x2="618.2" y2="259.6" stroke="#f7c840" stroke-width="1.2" opacity="0.3"/><line x1="615.9" y1="270.9" x2="623.5" y2="262.3" stroke="#f7c840" stroke-width="1.2" opacity="0.3"/><line x1="615.9" y1="270.9" x2="626.8" y2="267.2" stroke="#f7c840" stroke-width="1.2" opacity="0.3"/><circle cx="615.9" cy="270.9" r="7.3" fill="#f6bd17"/><text x="615.9" y="273.2" font-size="6.4" font-weight="700" fill="#2e2300" text-anchor="middle">39</text></g><g><circle cx="623.8" cy="302.6" r="10.5" fill="#f9d04a" opacity="0.55" filter="url(#bl2)"/><line x1="623.8" y1="302.6" x2="635.1" y2="304.9" stroke="#f7c840" stroke-width="1.2" opacity="0.3"/><line x1="623.8" y1="302.6" x2="632.4" y2="310.2" stroke="#f7c840" stroke-width="1.2" opacity="0.3"/><line x1="623.8" y1="302.6" x2="627.5" y2="313.5" stroke="#f7c840" stroke-width="1.2" opacity="0.3"/><line x1="623.8" y1="302.6" x2="621.5" y2="313.9" stroke="#f7c840" stroke-width="1.2" opacity="0.3"/><line x1="623.8" y1="302.6" x2="616.2" y2="311.2" stroke="#f7c840" stroke-width="1.2" opacity="0.3"/><line x1="623.8" y1="302.6" x2="612.9" y2="306.3" stroke="#f7c840" stroke-width="1.2" opacity="0.3"/><line x1="623.8" y1="302.6" x2="612.5" y2="300.3" stroke="#f7c840" stroke-width="1.2" opacity="0.3"/><line x1="623.8" y1="302.6" x2="615.2" y2="295.0" stroke="#f7c840" stroke-width="1.2" opacity="0.3"/><line x1="623.8" y1="302.6" x2="620.1" y2="291.7" stroke="#f7c840" stroke-width="1.2" opacity="0.3"/><line x1="623.8" y1="302.6" x2="626.1" y2="291.3" stroke="#f7c840" stroke-width="1.2" opacity="0.3"/><line x1="623.8" y1="302.6" x2="631.4" y2="294.0" stroke="#f7c840" stroke-width="1.2" opacity="0.3"/><line x1="623.8" y1="302.6" x2="634.7" y2="298.9" stroke="#f7c840" stroke-width="1.2" opacity="0.3"/><circle cx="623.8" cy="302.6" r="7.3" fill="#f6bd17"/><text x="623.8" y="304.90000000000003" font-size="6.4" font-weight="700" fill="#2e2300" text-anchor="middle">46</text></g><g><circle cx="650.3" cy="337.4" r="10.5" fill="#f9d04a" opacity="0.55" filter="url(#bl2)"/><line x1="650.3" y1="337.4" x2="661.6" y2="339.7" stroke="#f7c840" stroke-width="1.2" opacity="0.3"/><line x1="650.3" y1="337.4" x2="658.9" y2="345.0" stroke="#f7c840" stroke-width="1.2" opacity="0.3"/><line x1="650.3" y1="337.4" x2="654.0" y2="348.3" stroke="#f7c840" stroke-width="1.2" opacity="0.3"/><line x1="650.3" y1="337.4" x2="648.0" y2="348.7" stroke="#f7c840" stroke-width="1.2" opacity="0.3"/><line x1="650.3" y1="337.4" x2="642.7" y2="346.0" stroke="#f7c840" stroke-width="1.2" opacity="0.3"/><line x1="650.3" y1="337.4" x2="639.4" y2="341.1" stroke="#f7c840" stroke-width="1.2" opacity="0.3"/><line x1="650.3" y1="337.4" x2="639.0" y2="335.1" stroke="#f7c840" stroke-width="1.2" opacity="0.3"/><line x1="650.3" y1="337.4" x2="641.7" y2="329.8" stroke="#f7c840" stroke-width="1.2" opacity="0.3"/><line x1="650.3" y1="337.4" x2="646.6" y2="326.5" stroke="#f7c840" stroke-width="1.2" opacity="0.3"/><line x1="650.3" y1="337.4" x2="652.6" y2="326.1" stroke="#f7c840" stroke-width="1.2" opacity="0.3"/><line x1="650.3" y1="337.4" x2="657.9" y2="328.8" stroke="#f7c840" stroke-width="1.2" opacity="0.3"/><line x1="650.3" y1="337.4" x2="661.2" y2="333.7" stroke="#f7c840" stroke-width="1.2" opacity="0.3"/><circle cx="650.3" cy="337.4" r="7.3" fill="#f6bd17"/><text x="650.3" y="339.7" font-size="6.4" font-weight="700" fill="#2e2300" text-anchor="middle">40</text></g><g><circle cx="648" cy="371.8" r="10.5" fill="#f9d04a" opacity="0.55" filter="url(#bl2)"/><line x1="648" y1="371.8" x2="659.3" y2="374.1" stroke="#f7c840" stroke-width="1.2" opacity="0.3"/><line x1="648" y1="371.8" x2="656.6" y2="379.4" stroke="#f7c840" stroke-width="1.2" opacity="0.3"/><line x1="648" y1="371.8" x2="651.7" y2="382.7" stroke="#f7c840" stroke-width="1.2" opacity="0.3"/><line x1="648" y1="371.8" x2="645.7" y2="383.1" stroke="#f7c840" stroke-width="1.2" opacity="0.3"/><line x1="648" y1="371.8" x2="640.4" y2="380.4" stroke="#f7c840" stroke-width="1.2" opacity="0.3"/><line x1="648" y1="371.8" x2="637.1" y2="375.5" stroke="#f7c840" stroke-width="1.2" opacity="0.3"/><line x1="648" y1="371.8" x2="636.7" y2="369.5" stroke="#f7c840" stroke-width="1.2" opacity="0.3"/><line x1="648" y1="371.8" x2="639.4" y2="364.2" stroke="#f7c840" stroke-width="1.2" opacity="0.3"/><line x1="648" y1="371.8" x2="644.3" y2="360.9" stroke="#f7c840" stroke-width="1.2" opacity="0.3"/><line x1="648" y1="371.8" x2="650.3" y2="360.5" stroke="#f7c840" stroke-width="1.2" opacity="0.3"/><line x1="648" y1="371.8" x2="655.6" y2="363.2" stroke="#f7c840" stroke-width="1.2" opacity="0.3"/><line x1="648" y1="371.8" x2="658.9" y2="368.1" stroke="#f7c840" stroke-width="1.2" opacity="0.3"/><circle cx="648" cy="371.8" r="7.3" fill="#f6bd17"/><text x="648" y="374.1" font-size="6.4" font-weight="700" fill="#2e2300" text-anchor="middle">19</text></g><rect x="300.9" y="209.1" width="101.9" height="21.4" fill="#fff" rx="1"/><rect x="343" y="209.1" width="0.6" height="21.4" fill="#ebebeb"/><text x="313.2" y="223.4" font-size="9.6" fill="#222" font-weight="700" >Map</text><text x="356.5" y="223.4" font-size="9.85" fill="#666" font-weight="400" >Satellite</text><rect x="941.7" y="207.7" width="20.1" height="19.7" fill="#fff" rx="1"/><path d="M947.5,215.5 v-2.5 h2.5 M953.5,213 h2.5 v2.5 M956,219.5 v2.5 h-2.5 M950,222 h-2.5 v-2.5" fill="none" stroke="#666" stroke-width="1.3"/><ellipse cx="951.7" cy="353.5" rx="10.7" ry="9.4" fill="#fff"/><path d="M950,348.6 l1.7,-1.7 l1.7,1.7 M950,358.4 l1.7,1.7 l1.7,-1.7 M947.6,351.8 l-1.7,1.7 l1.7,1.7 M955.8,351.8 l1.7,1.7 l-1.7,1.7" fill="none" stroke="#555" stroke-width="1.1"/><rect x="941" y="383" width="21.3" height="21" fill="#fff" rx="1"/><circle cx="951.7" cy="387.6" r="2.4" fill="#f2b418"/><path d="M948.6,390 h6.2 l1.3,6.5 h-1.6 v5 h-1.6 v-4.2 h-0.6 v4.2 h-1.6 v-5 h-1.6z" fill="#f2b418"/><path d="M950.2,391 v5 M953.2,391 v5" stroke="#d89c10" stroke-width="0.5"/><rect x="829.5" y="409" width="138.5" height="7.8" fill="#f3f4f4" opacity="0.9"/><text x="832.4" y="415.4" font-size="5.25" fill="#444" font-weight="400" >Keyboard shortcuts</text><text x="885.2" y="415.4" font-size="5.2" fill="#444" font-weight="400" >Map data ©2025 Google</text><rect x="881.5" y="410.5" width="0.5" height="5" fill="#ccc"/><rect x="945.5" y="410.5" width="0.5" height="5" fill="#ccc"/><text x="949.6" y="415.4" font-size="5.2" fill="#444" font-weight="400" >Terms</text><text x="300.9" y="411.8" font-size="8.6" font-weight="700" opacity="0.75"><tspan fill="#4285f4">G</tspan><tspan fill="#ea4335">o</tspan><tspan fill="#fbbc05">o</tspan><tspan fill="#4285f4">g</tspan><tspan fill="#34a853">l</tspan><tspan fill="#ea4335">e</tspan></text></svg><div class="t" style="left:295.00px;top:424.13px;font-size:10.6px;line-height:10.6px;color:#636363;font-weight:700;">Violations by Threshold <span style="font-weight:400;color:#d0d0d0">(154)</span></div>
<div class="t" style="left:635.20px;top:423.93px;font-size:10.6px;line-height:10.6px;color:#636363;font-weight:700;">Bonuses by Threshold <span style="font-weight:400;color:#d0d0d0">(0)</span></div>
<div class="r" style="left:295.20px;top:443.80px;width:334.40px;height:156.20px;border:1px solid #f3f3f3;box-sizing:border-box;"></div>
<div class="r" style="left:461.00px;top:448.00px;width:1.00px;height:152.00px;background:#f3f3f3;"></div>
<div class="r" style="left:634.00px;top:441.70px;width:334.00px;height:158.30px;border:1px solid #f3f3f3;box-sizing:border-box;"></div>
<svg class="r" style="left:299.10px;top:446.30px" width="16" height="16" viewBox="-8 -8 16 16"><circle r="6.45" fill="#bdbdbd"/><rect x="-3.2" y="-2.4" width="6.4" height="4.6" rx="0.6" fill="none" stroke="#fff" stroke-width="1.1"/><path d="M-1.5,0.8 h3" stroke="#fff" stroke-width="1"/></svg>
<div class="t" style="left:318.90px;top:450.59px;font-size:7.45px;line-height:7.45px;color:#d4d4d4;font-weight:400;">Distraction*</div>
<div class="r" style="left:451.80px;top:454.40px;width:4.20px;height:0.80px;background:#d9d9d9;"></div>
<svg class="r" style="left:299.10px;top:461.75px" width="16" height="16" viewBox="-8 -8 16 16"><circle r="6.45" fill="#bdbdbd"/><path d="M-3.6,2.2 V-2.2 M-3.6,0.6 H3.6 V2.2 M-3.6,-0.6 H3.6" stroke="#fff" stroke-width="1.1" fill="none"/><circle cx="-1.8" cy="-1.4" r="0.9" fill="#fff"/></svg>
<div class="t" style="left:318.90px;top:466.04px;font-size:7.45px;line-height:7.45px;color:#d4d4d4;font-weight:400;">Drowsiness*</div>
<div class="r" style="left:451.80px;top:469.85px;width:4.20px;height:0.80px;background:#d9d9d9;"></div>
<svg class="r" style="left:299.10px;top:477.20px" width="16" height="16" viewBox="-8 -8 16 16"><circle r="6.45" fill="#bdbdbd"/><path d="M-3.6,-2 L-1.4,0 L-3.6,2 M3.6,-2 L1.4,0 L3.6,2" stroke="#fff" stroke-width="1.2" fill="none"/><circle r="1" fill="#fff"/></svg>
<div class="t" style="left:318.90px;top:481.49px;font-size:7.45px;line-height:7.45px;color:#d4d4d4;font-weight:400;">Forward Collision Warning*</div>
<div class="r" style="left:451.80px;top:485.30px;width:4.20px;height:0.80px;background:#d9d9d9;"></div>
<svg class="r" style="left:299.10px;top:492.65px" width="16" height="16" viewBox="-8 -8 16 16"><circle r="6.45" fill="#e15252"/><path d="M-2.6,-0.2 L0,-2.8 L2.6,-0.2 M-2.6,2.8 L0,0.2 L2.6,2.8" stroke="#fff" stroke-width="1.3" fill="none"/></svg>
<div class="t" style="left:318.90px;top:496.94px;font-size:7.45px;line-height:7.45px;color:#5a5a5a;font-weight:400;">Hard Acceleration</div>
<div class="t" style="right:568.00px;top:496.82px;font-size:7.6px;line-height:7.6px;color:#6d6d6d;font-weight:400;text-align:right;">0</div>
<svg class="r" style="left:299.10px;top:508.10px" width="16" height="16" viewBox="-8 -8 16 16"><circle r="6.45" fill="#e15252"/><path d="M-2.6,-2.8 L0,-0.2 L2.6,-2.8 M-2.6,0.2 L0,2.8 L2.6,0.2" stroke="#fff" stroke-width="1.3" fill="none"/></svg>
<div class="t" style="left:318.90px;top:512.39px;font-size:7.45px;line-height:7.45px;color:#5a5a5a;font-weight:400;">Hard Braking</div>
<div class="t" style="right:568.00px;top:512.27px;font-size:7.6px;line-height:7.6px;color:#6d6d6d;font-weight:400;text-align:right;">0</div>
<svg class="r" style="left:299.10px;top:523.55px" width="16" height="16" viewBox="-8 -8 16 16"><circle r="6.45" fill="#e15252"/><path d="M-3,-2.2 Q1.8,-2.2 2.8,3" stroke="#fff" stroke-width="1.3" fill="none"/></svg>
<div class="t" style="left:318.90px;top:527.84px;font-size:7.45px;line-height:7.45px;color:#5a5a5a;font-weight:400;">Hard Cornering</div>
<div class="t" style="right:568.00px;top:527.72px;font-size:7.6px;line-height:7.6px;color:#6d6d6d;font-weight:400;text-align:right;">0</div>
<svg class="r" style="left:299.10px;top:539.00px" width="16" height="16" viewBox="-8 -8 16 16"><circle r="6.45" fill="#bdbdbd"/><path d="M-3.8,0 H3.8 M-3.8,0 L-2.2,-1.6 M-3.8,0 L-2.2,1.6 M3.8,0 L2.2,-1.6 M3.8,0 L2.2,1.6" stroke="#fff" stroke-width="1.2" fill="none"/><rect x="-1.4" y="-1.4" width="2.8" height="2.8" fill="#fff"/></svg>
<div class="t" style="left:318.90px;top:543.29px;font-size:7.45px;line-height:7.45px;color:#d4d4d4;font-weight:400;">Headway Monitoring*</div>
<div class="r" style="left:451.80px;top:547.10px;width:4.20px;height:0.80px;background:#d9d9d9;"></div>
<svg class="r" style="left:299.10px;top:554.45px" width="16" height="16" viewBox="-8 -8 16 16"><circle r="6.45" fill="#e15252"/><circle r="3" fill="none" stroke="#fff" stroke-width="1"/><path d="M0,-1.6 V0.2 L1.2,1" stroke="#fff" stroke-width="0.9" fill="none"/></svg>
<div class="t" style="left:318.90px;top:558.74px;font-size:7.45px;line-height:7.45px;color:#5a5a5a;font-weight:400;">Idling</div>
<div class="t" style="right:568.00px;top:558.62px;font-size:7.6px;line-height:7.6px;color:#6d6d6d;font-weight:400;text-align:right;">0</div>
<svg class="r" style="left:299.10px;top:569.90px" width="16" height="16" viewBox="-8 -8 16 16"><circle r="6.45" fill="#e15252"/><path d="M-3.2,1.8 A3.3,3.3 0 1 1 3.2,1.8 Z" fill="none" stroke="#fff" stroke-width="1"/><path d="M0,1 L1.6,-1.2" stroke="#fff" stroke-width="1"/></svg>
<div class="t" style="left:318.90px;top:574.19px;font-size:7.45px;line-height:7.45px;color:#5a5a5a;font-weight:400;">Max Speed</div>
<div class="t" style="right:568.00px;top:574.07px;font-size:7.6px;line-height:7.6px;color:#4a7fc1;font-weight:400;text-align:right;">80</div>
<svg class="r" style="left:299.10px;top:585.35px" width="16" height="16" viewBox="-8 -8 16 16"><circle r="6.45" fill="#bdbdbd"/><path d="M-2.6,-3 V3.2 M-2.6,-2.6 H2.8 V0.8 H-2.6" stroke="#fff" stroke-width="1.1" fill="none"/></svg>
<div class="t" style="left:318.90px;top:589.64px;font-size:7.45px;line-height:7.45px;color:#d4d4d4;font-weight:400;">Miles Driven*</div>
<div class="r" style="left:451.80px;top:593.45px;width:4.20px;height:0.80px;background:#d9d9d9;"></div>
<svg class="r" style="left:465.60px;top:446.30px" width="16" height="16" viewBox="-8 -8 16 16"><circle r="6.45" fill="#bdbdbd"/><circle cx="0" cy="-1.6" r="1.5" fill="#fff"/><path d="M-3,3 Q-3,0.4 0,0.4 Q3,0.4 3,3z" fill="#fff"/></svg>
<div class="t" style="left:485.70px;top:450.59px;font-size:7.45px;line-height:7.45px;color:#d4d4d4;font-weight:400;">Missed Inspection*</div>
<div class="r" style="left:619.40px;top:454.40px;width:4.20px;height:0.80px;background:#d9d9d9;"></div>
<svg class="r" style="left:465.60px;top:461.75px" width="16" height="16" viewBox="-8 -8 16 16"><circle r="6.45" fill="#bdbdbd"/><circle cx="0" cy="-2" r="1.4" fill="#fff"/><path d="M-3,3.2 Q-3,-0.2 0,-0.2 Q3,-0.2 3,3.2z" fill="#fff"/><path d="M-2.4,0.4 L2.4,3" stroke="#bdbdbd" stroke-width="0.8"/></svg>
<div class="t" style="left:485.70px;top:466.04px;font-size:7.45px;line-height:7.45px;color:#d4d4d4;font-weight:400;">No Seatbelt*</div>
<div class="r" style="left:619.40px;top:469.85px;width:4.20px;height:0.80px;background:#d9d9d9;"></div>
<svg class="r" style="left:465.60px;top:477.20px" width="16" height="16" viewBox="-8 -8 16 16"><circle r="6.45" fill="#bdbdbd"/><path d="M-2.6,-3 L-1.2,-3 L-0.4,-1.2 L-1.3,-0.4 Q-0.4,1.3 1.1,1.9 L2,1 L3.4,1.9 L3.1,3.2 Q-3.6,2.8 -2.6,-3z" fill="#fff"/></svg>
<div class="t" style="left:485.70px;top:481.49px;font-size:7.45px;line-height:7.45px;color:#d4d4d4;font-weight:400;">Phone Use*</div>
<div class="r" style="left:619.40px;top:485.30px;width:4.20px;height:0.80px;background:#d9d9d9;"></div>
<svg class="r" style="left:465.60px;top:492.65px" width="16" height="16" viewBox="-8 -8 16 16"><circle r="6.45" fill="#bdbdbd"/><rect x="-3.6" y="0.6" width="7.2" height="1.8" fill="#fff"/><path d="M1.6,-0.6 Q1,-1.8 2.2,-3" stroke="#fff" stroke-width="0.8" fill="none"/></svg>
<div class="t" style="left:485.70px;top:496.94px;font-size:7.45px;line-height:7.45px;color:#d4d4d4;font-weight:400;">Smoking*</div>
<div class="r" style="left:619.40px;top:500.75px;width:4.20px;height:0.80px;background:#d9d9d9;"></div>
<svg class="r" style="left:465.60px;top:508.10px" width="16" height="16" viewBox="-8 -8 16 16"><circle r="6.45" fill="#e15252"/><path d="M-3.2,1.6 Q-3.2,-2.4 0.4,-2.4 Q3.6,-2.4 3.6,1.6z" fill="#fff"/><circle cx="-1.6" cy="1.9" r="1" fill="#fff"/><circle cx="1.9" cy="1.9" r="1" fill="#fff"/><path d="M0.4,-0.8 L1.6,0.6" stroke="#e15252" stroke-width="0.8"/></svg>
<div class="t" style="left:485.70px;top:512.39px;font-size:7.45px;line-height:7.45px;color:#5a5a5a;font-weight:400;">Speeding</div>
<div class="t" style="right:400.40px;top:512.27px;font-size:7.6px;line-height:7.6px;color:#4a7fc1;font-weight:400;text-align:right;">74</div>
<svg class="r" style="left:465.60px;top:523.55px" width="16" height="16" viewBox="-8 -8 16 16"><circle r="6.45" fill="#bdbdbd"/><rect x="-3.8" y="-1" width="3.4" height="2.4" rx="0.6" fill="#fff"/><rect x="0.4" y="-1" width="3.4" height="2.4" rx="0.6" fill="#fff"/></svg>
<div class="t" style="left:485.70px;top:527.84px;font-size:7.45px;line-height:7.45px;color:#d4d4d4;font-weight:400;">Tailgating*</div>
<div class="r" style="left:619.40px;top:531.65px;width:4.20px;height:0.80px;background:#d9d9d9;"></div>
<svg class="r" style="left:465.60px;top:539.00px" width="16" height="16" viewBox="-8 -8 16 16"><circle r="6.45" fill="#bdbdbd"/><path d="M1,-3.2 A3.3,3.3 0 1 0 3.2,1.6 A2.6,2.6 0 0 1 1,-3.2z" fill="#fff"/></svg>
<div class="t" style="left:485.70px;top:543.29px;font-size:7.45px;line-height:7.45px;color:#d4d4d4;font-weight:400;">Yawning*</div>
<div class="r" style="left:619.40px;top:547.10px;width:4.20px;height:0.80px;background:#d9d9d9;"></div>
<svg class="r" style="left:465.60px;top:554.45px" width="16" height="16" viewBox="-8 -8 16 16"><circle r="6.45" fill="#bdbdbd"/><circle cx="0" cy="-1.6" r="1.5" fill="#fff"/><path d="M-3,3 Q-3,0.4 0,0.4 Q3,0.4 3,3z" fill="#fff"/></svg>
<div class="t" style="left:485.70px;top:558.74px;font-size:7.45px;line-height:7.45px;color:#d4d4d4;font-weight:400;">Driver Event*</div>
<div class="r" style="left:619.40px;top:562.55px;width:4.20px;height:0.80px;background:#d9d9d9;"></div>
<svg class="r" style="left:465.60px;top:569.90px" width="16" height="16" viewBox="-8 -8 16 16"><circle r="6.45" fill="#bdbdbd"/><rect x="-3.2" y="-2.6" width="6.4" height="5.4" rx="0.8" fill="none" stroke="#fff" stroke-width="1"/><path d="M-1.6,-1 L1.6,1.4 M1.6,-1 L-1.6,1.4" stroke="#fff" stroke-width="0.9"/></svg>
<div class="t" style="left:485.70px;top:574.19px;font-size:7.45px;line-height:7.45px;color:#d4d4d4;font-weight:400;">Camera Obstructed*</div>
<div class="r" style="left:619.40px;top:578.00px;width:4.20px;height:0.80px;background:#d9d9d9;"></div>
<svg class="r" style="left:465.60px;top:585.35px" width="16" height="16" viewBox="-8 -8 16 16"><circle r="6.45" fill="#bdbdbd"/><path d="M-3.4,2.6 V0 L-2.4,-2.4 H2.4 L3.4,0 V2.6z" fill="#fff"/><path d="M-2,-0.2 H2" stroke="#bdbdbd" stroke-width="0.8"/></svg>
<div class="t" style="left:485.70px;top:589.64px;font-size:7.45px;line-height:7.45px;color:#d4d4d4;font-weight:400;">High G-Force*</div>
<div class="r" style="left:619.40px;top:593.45px;width:4.20px;height:0.80px;background:#d9d9d9;"></div>
<svg class="r" style="left:638.50px;top:446.00px" width="16" height="16" viewBox="-8 -8 16 16"><circle r="6.45" fill="#bdbdbd"/><path d="M-2.6,-3 V3.2 M-2.6,-2.6 H2.8 V0.8 H-2.6" stroke="#fff" stroke-width="1.1" fill="none"/></svg>
<div class="t" style="left:658.00px;top:450.29px;font-size:7.45px;line-height:7.45px;color:#d4d4d4;font-weight:400;">Miles Driven*</div>
<div class="r" style="left:958.40px;top:454.10px;width:4.20px;height:0.80px;background:#d9d9d9;"></div>
<svg class="r" style="left:638.50px;top:461.60px" width="16" height="16" viewBox="-8 -8 16 16"><circle r="6.45" fill="#4caf50"/><path d="M-2.6,-3 H2.6 V-0.8 Q2.6,1.2 0,1.4 Q-2.6,1.2 -2.6,-0.8z" fill="#fff"/><path d="M-0.5,1.3 H0.5 V2.4 H1.8 V3.2 H-1.8 V2.4 H-0.5z" fill="#fff"/></svg>
<div class="t" style="left:658.00px;top:465.89px;font-size:7.45px;line-height:7.45px;color:#5a5a5a;font-weight:400;">Miles Driven without Violation</div>
<div class="t" style="right:61.40px;top:465.77px;font-size:7.6px;line-height:7.6px;color:#6d6d6d;font-weight:400;text-align:right;">0</div>
<svg class="r" style="left:47.5px;top:51.5px;overflow:visible" width="9" height="9" viewBox="0 0 9 9"><g stroke="#a9a9a9" stroke-width="0.9" fill="none"><path d="M0.5,1.7 H8.5 M0.5,4.1 H8.5 M0.5,7 H8.5"/><path d="M6,0.6 V2.8 M1.6,3 V5.2 M3.8,5.9 V8.1"/></g></svg>
<svg class="r" style="left:65.5px;top:51.5px;overflow:visible" width="10" height="10" viewBox="0 0 10 10"><g stroke="#a5a5a5" stroke-width="1.1" fill="none"><circle cx="3.8" cy="3.6" r="2.7"/><path d="M5.8,5.7 L8.6,8.3"/></g></svg>
<svg class="r" style="left:604.5px;top:51.8px;overflow:visible" width="9" height="9" viewBox="0 0 9 9"><g stroke="#a9a9a9" stroke-width="0.9" fill="none"><circle cx="4.5" cy="4.5" r="3.9"/><path d="M4.5,2.6 V6.4 M2.6,4.5 H6.4"/></g></svg>
<svg class="r" style="left:644.2px;top:54.6px;overflow:visible" width="5" height="3" viewBox="0 0 5 3"><path d="M0.4,0.4 L2.5,2.4 L4.6,0.4" stroke="#b0b0b0" stroke-width="0.9" fill="none"/></svg>
<svg class="r" style="left:718.5px;top:54.6px;overflow:visible" width="5" height="3" viewBox="0 0 5 3"><path d="M0.4,0.4 L2.5,2.4 L4.6,0.4" stroke="#b0b0b0" stroke-width="0.9" fill="none"/></svg>
<svg class="r" style="left:674.6px;top:51.8px;overflow:visible" width="7.2" height="9" viewBox="0 0 7.2 9"><path d="M0,0 H5 L7.2,2.2 V9 H0z" fill="#b3b3b3"/><rect x="1.6" y="4.2" width="4" height="3.2" fill="#e0e0e0"/></svg>
<svg class="r" style="left:748.8px;top:52.3px;overflow:visible" width="7" height="8" viewBox="0 0 7 8"><path d="M3.5,0 C1.6,0.4 1.2,2 1.2,3.4 V5.2 L0,6.6 H7 L5.8,5.2 V3.4 C5.8,2 5.4,0.4 3.5,0z M2.6,7.1 H4.4 L3.5,8z" fill="#b0b0b0"/></svg>
<svg class="r" style="left:827.9px;top:52.4px;overflow:visible" width="8" height="8" viewBox="0 0 8 8"><polygon points="8.02,4.80 6.58,5.72 6.28,7.41 4.60,7.04 3.20,8.02 2.28,6.58 0.59,6.28 0.96,4.60 -0.02,3.20 1.42,2.28 1.72,0.59 3.40,0.96 4.80,-0.02 5.72,1.42 7.41,1.72 7.04,3.40" fill="#a3a3a3"/><circle cx="4" cy="4" r="1.3" fill="#fff"/></svg>
<svg class="r" style="left:45.3px;top:77.1px;overflow:visible" width="9" height="10.6" viewBox="3 1 18 22"><path d="M12 1L3 5v6c0 5.55 3.84 10.74 9 12 5.16-1.26 9-6.45 9-12V5l-9-4zm-2 16l-4-4 1.41-1.41L10 14.17l6.59-6.59L18 9l-8 8z" fill="#585858"/></svg>
<svg class="r" style="left:139.7px;top:146px;overflow:visible" width="6.5" height="11" viewBox="0 0 6.5 11"><path d="M0.6,3.4 L2.9,0.8 L5.3,3.4 M0.6,7.4 L2.9,10.1 L5.3,7.4" stroke="#8a8a8a" stroke-width="0.9" fill="none"/></svg>
<svg class="r" style="left:957px;top:122px;overflow:visible" width="5.4" height="3.4" viewBox="0 0 5.4 3.4"><path d="M0.5,0.5 L2.7,2.7 L4.9,0.5" stroke="#e9814f" stroke-width="1" fill="none"/></svg>
<svg class="r" style="left:467px;top:147.3px;overflow:visible" width="6.5" height="9" viewBox="0 0 6.5 9"><path d="M5.2,0.7 L1.3,4.4 L5.2,8.1" stroke="#555" stroke-width="1.4" fill="none"/></svg>
<svg class="r" style="left:556px;top:147.3px;overflow:visible" width="6.5" height="9" viewBox="0 0 6.5 9"><path d="M1,0.7 L4.9,4.4 L1,8.1" stroke="#777" stroke-width="1.1" fill="none"/></svg>
<svg class="r" style="left:878.5px;top:145.5px;overflow:visible" width="10.5" height="11.5" viewBox="0 0 10.5 11.5"><g stroke="#6bbf6b" fill="none"><circle cx="5.2" cy="6.5" r="4.1" stroke-width="1.1"/><path d="M3.8,0.8 H6.6 M5.2,0.8 V2.4" stroke-width="1"/><path d="M5.2,4.4 V6.6" stroke="#8a8a8a" stroke-width="0.9"/></g></svg>
<svg class="r" style="left:60px;top:173.6px;overflow:visible" width="8" height="8" viewBox="0 0 8 8"><path d="M0.6,0 H1.5 V7.8 H0.6z M1.5,0.3 H4.6 L5,1.2 H7.6 V5.4 H4.3 L3.9,4.5 H1.5z" fill="#fff"/></svg>
<svg class="r" style="left:50.2px;top:184.7px;overflow:visible" width="4.6" height="4.5" viewBox="0 0 4.6 4.5"><path d="M0,0 H4.4 V4.3z" fill="#a93434"/></svg>
<svg class="r" style="left:61.3px;top:233px;overflow:visible" width="35.5" height="23.7" viewBox="0 0 35.5 23.7"><defs><linearGradient id="cg" x1="0" y1="0" x2="0" y2="1"><stop offset="0" stop-color="#e6e6e6"/><stop offset="1" stop-color="#cfd1d2"/></linearGradient></defs>
<rect width="35.5" height="23.7" fill="url(#cg)"/>
<path d="M9,8 Q12,3 20,2.6 Q29,2.6 32,6 L34,9 V23.7 H1 V11 Q3,9 9,8z" fill="#7d8383"/>
<path d="M12,7 Q15,4 21,3.8 Q28,3.8 30.5,7 L31,8.8 H10z" fill="#9aa5a3"/>
<rect x="3" y="9.6" width="30" height="1.6" fill="#b9bcbd"/>
<rect x="4" y="11.6" width="29" height="2.6" fill="#2f3435"/>
<rect x="3" y="14.4" width="30" height="1.8" fill="#aeb1b2"/>
<rect x="5" y="16.6" width="26" height="2.6" fill="#34383a"/>
<rect x="1" y="19.6" width="33" height="4.1" fill="#8f9293"/>
<rect x="2" y="21" width="9" height="1.5" fill="#c9cbcc"/>
<rect x="23" y="21" width="10" height="1.5" fill="#c9cbcc"/>
<rect x="0" y="9.5" width="2.5" height="5" fill="#8d5863"/>
<rect x="28" y="17.2" width="6" height="1.8" fill="#8a5a66"/>
<rect x="34.2" y="1.5" width="1.3" height="22.2" fill="#444"/></svg>
<svg class="r" style="left:265px;top:310.0px;overflow:visible" width="5" height="6.6" viewBox="0 0 5 6.6"><path d="M0.8,0.6 L3.9,3.3 L0.8,6" stroke="#8c8c8c" stroke-width="1.1" fill="none"/></svg>
<svg class="r" style="left:265px;top:341.1px;overflow:visible" width="5" height="6.6" viewBox="0 0 5 6.6"><path d="M0.8,0.6 L3.9,3.3 L0.8,6" stroke="#8c8c8c" stroke-width="1.1" fill="none"/></svg>
<div class="r" style="left:0.00px;top:597.00px;width:984.00px;height:49.00px;background:#000;"></div>
<div class="r" style="left:984.00px;top:600.00px;width:40.00px;height:46.00px;background:#000;"></div>
<div class="r" style="left:1000.00px;top:0.00px;width:24.00px;height:646.00px;background:#000;"></div>
</div></div>
</body></html>
